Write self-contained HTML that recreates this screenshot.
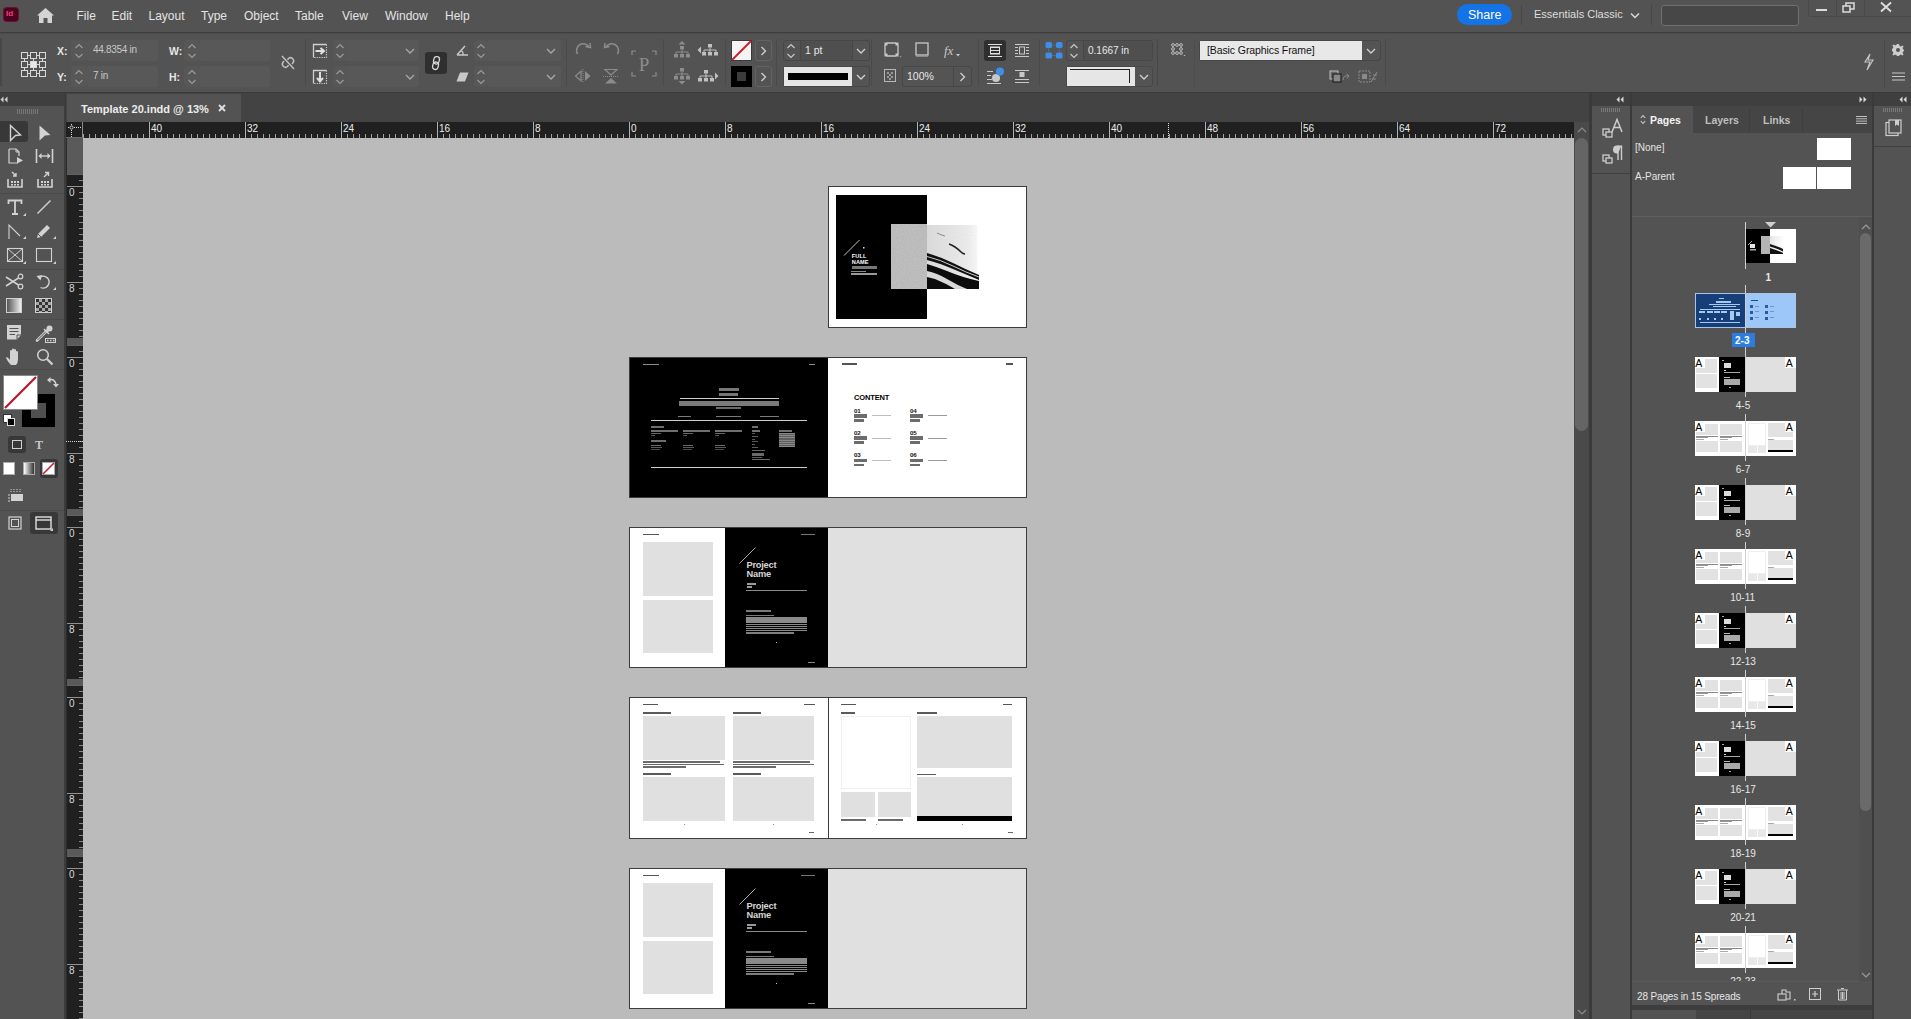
<!DOCTYPE html><html><head><meta charset="utf-8"><style>*{margin:0;padding:0;box-sizing:border-box}
html,body{width:1911px;height:1019px;overflow:hidden;background:#535353;font-family:"Liberation Sans",sans-serif;color:#d6d6d6;position:relative}
.a{position:absolute}
.t{white-space:pre;line-height:1}
svg{position:absolute;overflow:visible}
</style></head><body>
<div class="a" style="left:0px;top:0px;width:1911px;height:32px;background:#535353;"></div>
<div class="a" style="left:0px;top:32px;width:1911px;height:1px;background:#3e3e3e;"></div>
<div class="a" style="left:0px;top:33px;width:1911px;height:1px;background:#4b4b4b;"></div>
<div class="a" style="left:4px;top:8px;width:14px;height:13px;background:#4a0420;border-radius:3px;box-shadow:0 0 0 1px #6b1232"></div>
<div class="a t" style="left:6px;top:10px;font-size:8px;color:#ff3d7a;font-weight:700;">Id</div>
<svg style="left:36px;top:7px" width="19" height="17" viewBox="0 0 19 17"><path d="M9.5 1 L18 8.5 L16 8.5 L16 16 L11.5 16 L11.5 11 L7.5 11 L7.5 16 L3 16 L3 8.5 L1 8.5 Z" fill="#d4d4d4"/></svg>
<div class="a t" style="left:76.5px;top:10px;font-size:12px;color:#e4e4e4;font-weight:400;">File</div>
<div class="a t" style="left:111.5px;top:10px;font-size:12px;color:#e4e4e4;font-weight:400;">Edit</div>
<div class="a t" style="left:148.5px;top:10px;font-size:12px;color:#e4e4e4;font-weight:400;">Layout</div>
<div class="a t" style="left:201px;top:10px;font-size:12px;color:#e4e4e4;font-weight:400;">Type</div>
<div class="a t" style="left:244px;top:10px;font-size:12px;color:#e4e4e4;font-weight:400;">Object</div>
<div class="a t" style="left:295px;top:10px;font-size:12px;color:#e4e4e4;font-weight:400;">Table</div>
<div class="a t" style="left:342px;top:10px;font-size:12px;color:#e4e4e4;font-weight:400;">View</div>
<div class="a t" style="left:385px;top:10px;font-size:12px;color:#e4e4e4;font-weight:400;">Window</div>
<div class="a t" style="left:445px;top:10px;font-size:12px;color:#e4e4e4;font-weight:400;">Help</div>
<div class="a" style="left:1457px;top:4px;width:55px;height:21px;background:#1473e6;border-radius:11px"></div>
<div class="a t" style="left:1468px;top:9px;font-size:12.5px;color:#ffffff;font-weight:400;">Share</div>
<div class="a" style="left:1521px;top:5px;width:1px;height:20px;background:#464646;"></div>
<div class="a t" style="left:1534px;top:9px;font-size:11px;color:#dedede;font-weight:400;">Essentials Classic</div>
<svg style="left:1630px;top:12px" width="10" height="7" viewBox="0 0 10 7"><path d="M1 1.5 L5 5.5 L9 1.5" stroke="#d8d8d8" stroke-width="1.5" fill="none"/></svg>
<div class="a" style="left:1651px;top:5px;width:1px;height:20px;background:#464646;"></div>
<div class="a" style="left:1661px;top:5px;width:138px;height:21px;background:#474747;border:1px solid #707070;border-radius:3px"></div>
<div class="a" style="left:1808px;top:-1px;width:104px;height:18px;border:1px solid #4a4a4a;border-radius:0 0 0 3px"></div>
<div class="a" style="left:1836px;top:0px;width:1px;height:17px;background:#4a4a4a;"></div>
<div class="a" style="left:1864px;top:0px;width:1px;height:17px;background:#4a4a4a;"></div>
<div class="a" style="left:1816px;top:9px;width:11px;height:2px;background:#dcdcdc;"></div>
<svg style="left:1842px;top:2px" width="13" height="11" viewBox="0 0 13 11"><rect x="1" y="4" width="7" height="6" stroke="#dcdcdc" stroke-width="1.5" fill="none"/><path d="M4 4 V1 H12 V7 H8" stroke="#dcdcdc" stroke-width="1.5" fill="none"/></svg>
<svg style="left:1880px;top:2px" width="12" height="10" viewBox="0 0 12 10"><path d="M1 0.5 L11 9.5 M11 0.5 L1 9.5" stroke="#e0e0e0" stroke-width="1.8"/></svg>
<div class="a" style="left:0px;top:34px;width:1911px;height:58px;background:#535353;"></div>
<div class="a" style="left:0px;top:92px;width:1911px;height:1px;background:#3a3a3a;"></div>
<div class="a" style="left:0px;top:38px;width:2px;height:48px;background:#474747;"></div>
<svg style="left:20px;top:51px" width="27" height="26" viewBox="0 0 27 26"><rect x="1.5" y="1.5" width="6" height="6" stroke="#d8d8d8" stroke-width="1" fill="none"/><rect x="1.5" y="10.5" width="6" height="6" stroke="#d8d8d8" stroke-width="1" fill="none"/><rect x="1.5" y="19.5" width="6" height="6" stroke="#d8d8d8" stroke-width="1" fill="none"/><rect x="10.5" y="1.5" width="6" height="6" stroke="#d8d8d8" stroke-width="1" fill="none"/><rect x="10.5" y="10.5" width="6" height="6" stroke="#d8d8d8" stroke-width="1" fill="#e8e8e8"/><rect x="10.5" y="19.5" width="6" height="6" stroke="#d8d8d8" stroke-width="1" fill="none"/><rect x="19.5" y="1.5" width="6" height="6" stroke="#d8d8d8" stroke-width="1" fill="none"/><rect x="19.5" y="10.5" width="6" height="6" stroke="#d8d8d8" stroke-width="1" fill="none"/><rect x="19.5" y="19.5" width="6" height="6" stroke="#d8d8d8" stroke-width="1" fill="none"/><path d="M7.5 4.5 H10 M16.5 4.5 H19 M7.5 13.5 H10 M16.5 13.5 H19 M7.5 22.5 H10 M16.5 22.5 H19 M4.5 7.5 V10 M4.5 16.5 V19 M13.5 7.5 V10 M13.5 16.5 V19 M22.5 7.5 V10 M22.5 16.5 V19" stroke="#d8d8d8" stroke-width="1"/></svg>
<div class="a t" style="left:57px;top:46px;font-size:10.5px;color:#e6e6e6;font-weight:700;">X:</div>
<div class="a t" style="left:57px;top:72px;font-size:10.5px;color:#e6e6e6;font-weight:700;">Y:</div>
<div class="a" style="left:87px;top:40px;width:71px;height:21px;background:#585858;border-radius:2px"></div>
<div class="a" style="left:71px;top:40px;width:16px;height:21px;background:#575757;border-radius:3px"></div><svg style="left:74.0px;top:43px" width="10" height="16" viewBox="0 0 10 16"><path d="M1.5 5 L5 1.5 L8.5 5 M1.5 11 L5 14.5 L8.5 11" stroke="#9a9a9a" stroke-width="1.2" fill="none"/></svg>
<div class="a" style="left:87px;top:66px;width:71px;height:21px;background:#585858;border-radius:2px"></div>
<div class="a" style="left:71px;top:66px;width:16px;height:21px;background:#575757;border-radius:3px"></div><svg style="left:74.0px;top:69px" width="10" height="16" viewBox="0 0 10 16"><path d="M1.5 5 L5 1.5 L8.5 5 M1.5 11 L5 14.5 L8.5 11" stroke="#9a9a9a" stroke-width="1.2" fill="none"/></svg>
<div class="a t" style="left:93px;top:45px;font-size:10px;color:#c8c8c8;font-weight:400;letter-spacing:-0.3px">44.8354 in</div>
<div class="a t" style="left:93px;top:71px;font-size:10px;color:#c8c8c8;font-weight:400;letter-spacing:-0.3px">7 in</div>
<div class="a t" style="left:169px;top:46px;font-size:10.5px;color:#e6e6e6;font-weight:700;">W:</div>
<div class="a t" style="left:169px;top:72px;font-size:10.5px;color:#e6e6e6;font-weight:700;">H:</div>
<div class="a" style="left:200px;top:40px;width:70px;height:21px;background:#585858;border-radius:2px"></div>
<div class="a" style="left:184px;top:40px;width:16px;height:21px;background:#575757;border-radius:3px"></div><svg style="left:187.0px;top:43px" width="10" height="16" viewBox="0 0 10 16"><path d="M1.5 5 L5 1.5 L8.5 5 M1.5 11 L5 14.5 L8.5 11" stroke="#9a9a9a" stroke-width="1.2" fill="none"/></svg>
<div class="a" style="left:200px;top:66px;width:70px;height:21px;background:#585858;border-radius:2px"></div>
<div class="a" style="left:184px;top:66px;width:16px;height:21px;background:#575757;border-radius:3px"></div><svg style="left:187.0px;top:69px" width="10" height="16" viewBox="0 0 10 16"><path d="M1.5 5 L5 1.5 L8.5 5 M1.5 11 L5 14.5 L8.5 11" stroke="#9a9a9a" stroke-width="1.2" fill="none"/></svg>
<svg style="left:281px;top:55px" width="14" height="15" viewBox="0 0 14 15"><path d="M3 6 L1.8 7.5 Q0.5 9.5 2.5 11.5 Q4.5 13.2 6.5 11.5 L7.5 10.2 M11 9 L12.2 7.5 Q13.5 5.5 11.5 3.5 Q9.5 1.8 7.5 3.5 L6.5 4.8 M1 1 L13 14" stroke="#c0c0c0" stroke-width="1.5" fill="none"/></svg>
<div class="a" style="left:305px;top:39px;width:1px;height:47px;background:#4a4a4a;"></div>
<svg style="left:312px;top:43px" width="16" height="16" viewBox="0 0 16 16"><path d="M1.5 14.5 V1.5 H14.5" stroke="#d0d0d0" stroke-width="1.3" fill="none"/><path d="M14.5 1.5 V14.5 H1.5" stroke="#d0d0d0" stroke-width="1.1" stroke-dasharray="1.2 1.2" fill="none"/><path d="M3.5 8 H11 M8.5 5 L12 8 L8.5 11" stroke="#e0e0e0" stroke-width="2" fill="none"/></svg>
<svg style="left:312px;top:69px" width="16" height="16" viewBox="0 0 16 16"><path d="M1.5 14.5 V1.5 H14.5" stroke="#d0d0d0" stroke-width="1.3" fill="none"/><path d="M14.5 1.5 V14.5 H1.5" stroke="#d0d0d0" stroke-width="1.1" stroke-dasharray="1.2 1.2" fill="none"/><path d="M8 3 V11.5 M5 9 L8 12.5 L11 9" stroke="#e0e0e0" stroke-width="2" fill="none"/></svg>
<div class="a" style="left:346px;top:40px;width:73px;height:21px;background:#585858;border-radius:2px"></div>
<div class="a" style="left:333px;top:40px;width:14px;height:21px;background:#575757;border-radius:3px"></div><svg style="left:335.0px;top:43px" width="10" height="16" viewBox="0 0 10 16"><path d="M1.5 5 L5 1.5 L8.5 5 M1.5 11 L5 14.5 L8.5 11" stroke="#9a9a9a" stroke-width="1.2" fill="none"/></svg>
<svg style="left:405px;top:48px" width="10" height="6" viewBox="0 0 10 6"><path d="M1 1 L5 5 L9 1" stroke="#a8a8a8" stroke-width="1.3" fill="none"/></svg>
<div class="a" style="left:346px;top:66px;width:73px;height:21px;background:#585858;border-radius:2px"></div>
<div class="a" style="left:333px;top:66px;width:14px;height:21px;background:#575757;border-radius:3px"></div><svg style="left:335.0px;top:69px" width="10" height="16" viewBox="0 0 10 16"><path d="M1.5 5 L5 1.5 L8.5 5 M1.5 11 L5 14.5 L8.5 11" stroke="#9a9a9a" stroke-width="1.2" fill="none"/></svg>
<svg style="left:405px;top:74px" width="10" height="6" viewBox="0 0 10 6"><path d="M1 1 L5 5 L9 1" stroke="#a8a8a8" stroke-width="1.3" fill="none"/></svg>
<div class="a" style="left:425px;top:52px;width:22px;height:22px;background:#2f2f2f;border-radius:3px"></div>
<svg style="left:431px;top:55px" width="10" height="16" viewBox="0 0 10 16"><g transform="rotate(15 5 8)"><rect x="2" y="1.5" width="5.5" height="7.5" rx="2.75" stroke="#d8d8d8" stroke-width="1.3" fill="none"/><rect x="2.5" y="7" width="5.5" height="7.5" rx="2.75" stroke="#d8d8d8" stroke-width="1.3" fill="none"/></g></svg>
<svg style="left:456px;top:45px" width="13" height="11" viewBox="0 0 13 11"><path d="M1 10 L9 1 M1 10 H12" stroke="#c8c8c8" stroke-width="1.5" fill="none"/><path d="M7 10 Q7.5 6.5 5 5.5" stroke="#c8c8c8" stroke-width="1.2" fill="none"/></svg>
<svg style="left:456px;top:72px" width="13" height="10" viewBox="0 0 13 10"><path d="M4 0.5 H12.5 L9 9.5 H0.5 Z" fill="#c8c8c8"/></svg>
<div class="a" style="left:488px;top:40px;width:73px;height:21px;background:#585858;border-radius:2px"></div>
<div class="a" style="left:474px;top:40px;width:14px;height:21px;background:#575757;border-radius:3px"></div><svg style="left:476.0px;top:43px" width="10" height="16" viewBox="0 0 10 16"><path d="M1.5 5 L5 1.5 L8.5 5 M1.5 11 L5 14.5 L8.5 11" stroke="#9a9a9a" stroke-width="1.2" fill="none"/></svg>
<svg style="left:546px;top:48px" width="10" height="6" viewBox="0 0 10 6"><path d="M1 1 L5 5 L9 1" stroke="#a8a8a8" stroke-width="1.3" fill="none"/></svg>
<div class="a" style="left:488px;top:66px;width:73px;height:21px;background:#585858;border-radius:2px"></div>
<div class="a" style="left:474px;top:66px;width:14px;height:21px;background:#575757;border-radius:3px"></div><svg style="left:476.0px;top:69px" width="10" height="16" viewBox="0 0 10 16"><path d="M1.5 5 L5 1.5 L8.5 5 M1.5 11 L5 14.5 L8.5 11" stroke="#9a9a9a" stroke-width="1.2" fill="none"/></svg>
<svg style="left:546px;top:74px" width="10" height="6" viewBox="0 0 10 6"><path d="M1 1 L5 5 L9 1" stroke="#a8a8a8" stroke-width="1.3" fill="none"/></svg>
<div class="a" style="left:566px;top:39px;width:1px;height:47px;background:#4a4a4a;"></div>
<svg style="left:575px;top:42px" width="18" height="16" viewBox="0 0 18 16"><path d="M2.5 12 A6.5 6.5 0 0 1 14 5" stroke="#8c8c8c" stroke-width="1.5" fill="none"/><path d="M10.5 4.5 L15.5 5.5 L15 1" stroke="#8c8c8c" stroke-width="1.5" fill="none"/></svg>
<svg style="left:602px;top:42px" width="18" height="16" viewBox="0 0 18 16"><path d="M15.5 12 A6.5 6.5 0 0 0 4 5" stroke="#8c8c8c" stroke-width="1.5" fill="none"/><path d="M7.5 4.5 L2.5 5.5 L3 1" stroke="#8c8c8c" stroke-width="1.5" fill="none"/></svg>
<svg style="left:574px;top:68px" width="18" height="16" viewBox="0 0 18 16"><path d="M7 3 V13 L1.5 8 Z" stroke="#8c8c8c" stroke-width="1.2" fill="none"/><path d="M11 3 V13 L16.5 8 Z" fill="#8c8c8c"/><path d="M9 1 V15" stroke="#8c8c8c" stroke-width="1" stroke-dasharray="1 1"/></svg>
<svg style="left:602px;top:68px" width="18" height="17" viewBox="0 0 18 17"><path d="M3 1.5 H15 L9 7 Z" stroke="#8c8c8c" stroke-width="1.2" fill="none"/><path d="M3 15.5 H15 L9 10 Z" fill="#8c8c8c"/><path d="M1 8.5 H17" stroke="#8c8c8c" stroke-width="1" stroke-dasharray="1 1"/></svg>
<svg style="left:631px;top:50px" width="26" height="27" viewBox="0 0 26 27"><path d="M1 5 V1 H5 M21 1 H25 V5 M25 22 V26 H21 M5 26 H1 V22" stroke="#8c8c8c" stroke-width="1.2" fill="none"/><text x="13" y="21" font-family="Liberation Serif" font-size="19" fill="#8c8c8c" text-anchor="middle">P</text></svg>
<div class="a" style="left:663px;top:39px;width:1px;height:47px;background:#4a4a4a;"></div>
<svg style="left:672px;top:41px" width="20" height="18" viewBox="0 0 20 18"><rect x="8" y="5" width="4" height="3.5" fill="#8c8c8c"/><path d="M10 8.5 V11 M4 11 H16 M4 11 V13 M10 11 V13 M16 11 V13" stroke="#8c8c8c" stroke-width="1"/><rect x="2" y="13" width="4" height="3.5" fill="#8c8c8c"/><rect x="8" y="13" width="4" height="3.5" fill="#8c8c8c"/><rect x="14" y="13" width="4" height="3.5" fill="#8c8c8c"/><path d="M6.5 3.5 L10 0 L13.5 3.5 Z" fill="#8c8c8c"/></svg>
<svg style="left:697px;top:43px" width="22" height="14" viewBox="0 0 22 14"><path d="M0.5 7 L4 3.5 V10.5 Z" fill="#c0c0c0"/><rect x="11" y="1" width="4" height="3.5" fill="#c0c0c0"/><path d="M13 4.5 V7 M7 7 H19 M7 7 V9 M13 7 V9 M19 7 V9" stroke="#c0c0c0" stroke-width="1"/><rect x="5" y="9" width="4" height="3.5" fill="#c0c0c0"/><rect x="11" y="9" width="4" height="3.5" fill="#c0c0c0"/><rect x="17" y="9" width="4" height="3.5" fill="#c0c0c0"/></svg>
<svg style="left:672px;top:67px" width="20" height="18" viewBox="0 0 20 18"><rect x="8" y="1" width="4" height="3.5" fill="#8c8c8c"/><path d="M10 4.5 V7 M4 7 H16 M4 7 V9 M10 7 V9 M16 7 V9" stroke="#8c8c8c" stroke-width="1"/><rect x="2" y="9" width="4" height="3.5" fill="#8c8c8c"/><rect x="8" y="9" width="4" height="3.5" fill="#8c8c8c"/><rect x="14" y="9" width="4" height="3.5" fill="#8c8c8c"/><path d="M6.5 14 L10 17.5 L13.5 14 Z" fill="#8c8c8c"/></svg>
<svg style="left:697px;top:69px" width="22" height="14" viewBox="0 0 22 14"><path d="M21.5 7 L18 3.5 V10.5 Z" fill="#c0c0c0"/><rect x="7" y="1" width="4" height="3.5" fill="#c0c0c0"/><path d="M9 4.5 V7 M3 7 H15 M3 7 V9 M9 7 V9 M15 7 V9" stroke="#c0c0c0" stroke-width="1"/><rect x="1" y="9" width="4" height="3.5" fill="#c0c0c0"/><rect x="7" y="9" width="4" height="3.5" fill="#c0c0c0"/><rect x="13" y="9" width="4" height="3.5" fill="#c0c0c0"/></svg>
<div class="a" style="left:725px;top:39px;width:1px;height:47px;background:#4a4a4a;"></div>
<div class="a" style="left:731px;top:40px;width:21px;height:21px;background:#f4f4f4;border:1px solid #3a3a3a"></div>
<svg style="left:731px;top:40px" width="21" height="21" viewBox="0 0 21 21"><path d="M1 20 L20 1" stroke="#c8202c" stroke-width="2"/></svg>
<div class="a" style="left:731px;top:66px;width:21px;height:21px;background:#000;"></div>
<div class="a" style="left:737px;top:72px;width:9px;height:9px;background:#3c3c3c;"></div>
<div class="a" style="left:755px;top:40px;width:17px;height:21px;border:1px solid #636363;border-radius:3px"></div>
<svg style="left:760px;top:46px" width="7" height="10" viewBox="0 0 7 10"><path d="M1.5 1 L5.5 5 L1.5 9" stroke="#d0d0d0" stroke-width="1.3" fill="none"/></svg>
<div class="a" style="left:755px;top:66px;width:17px;height:21px;border:1px solid #636363;border-radius:3px"></div>
<svg style="left:760px;top:72px" width="7" height="10" viewBox="0 0 7 10"><path d="M1.5 1 L5.5 5 L1.5 9" stroke="#d0d0d0" stroke-width="1.3" fill="none"/></svg>
<div class="a" style="left:776px;top:39px;width:1px;height:47px;background:#4a4a4a;"></div>
<div class="a" style="left:783px;top:40px;width:87px;height:21px;border:1px solid #474747;border-radius:3px;background:#545454"></div>
<div class="a" style="left:800px;top:41px;width:1px;height:19px;background:#474747;"></div>
<div class="a" style="left:852px;top:41px;width:1px;height:19px;background:#474747;"></div>
<div class="a" style="left:801px;top:41px;width:51px;height:19px;background:#4f4f4f"></div>
<svg style="left:786px;top:43px" width="10" height="16" viewBox="0 0 10 16"><path d="M1.5 5 L5 1.5 L8.5 5 M1.5 11 L5 14.5 L8.5 11" stroke="#c8c8c8" stroke-width="1.2" fill="none"/></svg>
<div class="a t" style="left:805px;top:45px;font-size:10.5px;color:#e8e8e8;font-weight:400;">1 pt</div>
<svg style="left:856px;top:48px" width="10" height="6" viewBox="0 0 10 6"><path d="M1 1 L5 5 L9 1" stroke="#d0d0d0" stroke-width="1.3" fill="none"/></svg>
<div class="a" style="left:783px;top:66px;width:87px;height:21px;border:1px solid #474747;border-radius:3px;background:#545454"></div>
<div class="a" style="left:784px;top:67px;width:68px;height:19px;background:#e6e6e6"></div>
<div class="a" style="left:788px;top:73px;width:60px;height:7px;background:#000;"></div>
<svg style="left:856px;top:74px" width="10" height="6" viewBox="0 0 10 6"><path d="M1 1 L5 5 L9 1" stroke="#d0d0d0" stroke-width="1.3" fill="none"/></svg>
<div class="a" style="left:871px;top:39px;width:1px;height:47px;background:#4a4a4a;"></div>
<svg style="left:884px;top:42px" width="18" height="16" viewBox="0 0 18 16"><path d="M3 1 H12 M1 3 V12 M3 14 H12 M14 3 V12" stroke="#c8c8c8" stroke-width="1.3"/><rect x="0.5" y="0.5" width="3" height="3" fill="#c8c8c8"/><rect x="11.5" y="0.5" width="3" height="3" fill="#c8c8c8"/><rect x="0.5" y="11.5" width="3" height="3" fill="#c8c8c8"/><rect x="11.5" y="11.5" width="3" height="3" fill="#c8c8c8"/><path d="M15.5 14.5 L17.5 14.5 L16.5 15.5 Z" fill="#c8c8c8"/></svg>
<svg style="left:915px;top:42px" width="14" height="15" viewBox="0 0 14 15"><rect x="1" y="1" width="12" height="12" stroke="#c8c8c8" stroke-width="1.3" fill="none"/><path d="M1 14.5 H13" stroke="#8a8a8a" stroke-width="1"/></svg>
<div class="a t" style="left:944px;top:44px;font-size:13px;color:#c8c8c8;font-weight:400;font-family:Liberation Serif"><i>fx</i></div>
<svg style="left:956px;top:54px" width="4" height="3" viewBox="0 0 4 3"><path d="M0 0 H4 L2 2.5 Z" fill="#c8c8c8"/></svg>
<svg style="left:884px;top:69px" width="12" height="13" viewBox="0 0 12 13"><rect x="0.5" y="0.5" width="11" height="12" stroke="#b8b8b8" stroke-width="1" fill="none"/><path d="M3 3 H5 V5 H3 Z M7 3 H9 V5 H7 Z M5 5 H7 V7 H5 Z M3 7 H5 V9 H3 Z M7 7 H9 V9 H7 Z M5 9 H7 V11 H5 Z" fill="#9a9a9a"/></svg>
<div class="a" style="left:902px;top:66px;width:70px;height:21px;border:1px solid #474747;border-radius:3px;background:#545454"></div>
<div class="a" style="left:953px;top:67px;width:1px;height:19px;background:#474747;"></div>
<div class="a t" style="left:907px;top:71px;font-size:10.5px;color:#e8e8e8;font-weight:400;">100%</div>
<svg style="left:959px;top:72px" width="7" height="10" viewBox="0 0 7 10"><path d="M1.5 1 L5.5 5 L1.5 9" stroke="#d0d0d0" stroke-width="1.3" fill="none"/></svg>
<div class="a" style="left:978px;top:39px;width:1px;height:47px;background:#4a4a4a;"></div>
<div class="a" style="left:984px;top:40px;width:22px;height:21px;background:#2f2f2f;border-radius:3px"></div>
<svg style="left:987px;top:43px" width="16" height="15" viewBox="0 0 16 15"><path d="M1 1.5 H15 M1 13.5 H15 M3 4.5 H13 M3 7.5 H13 M3 10.5 H13" stroke="#e0e0e0" stroke-width="1.2"/><rect x="3.5" y="4" width="9" height="7" stroke="#e0e0e0" stroke-width="1" fill="none"/></svg>
<svg style="left:1014px;top:43px" width="16" height="15" viewBox="0 0 16 15"><path d="M1 1.5 H15 M1 13.5 H15 M1 4.5 H4 M1 7.5 H4 M1 10.5 H4 M12 4.5 H15 M12 7.5 H15 M12 10.5 H15" stroke="#c8c8c8" stroke-width="1.2"/><rect x="5.5" y="4" width="5" height="7" stroke="#c8c8c8" stroke-width="1" fill="none"/></svg>
<svg style="left:986px;top:67px" width="20" height="18" viewBox="0 0 20 18"><path d="M1 4.5 H7 M1 8.5 H5 M1 12.5 H6 M1 16.5 H15" stroke="#c8c8c8" stroke-width="1.2"/><circle cx="10" cy="11" r="4" fill="#c8c8c8"/><circle cx="14" cy="4.5" r="4" fill="#3d8fe8"/></svg>
<svg style="left:1014px;top:69px" width="16" height="15" viewBox="0 0 16 15"><path d="M1 1.5 H15 M1 13.5 H15 M1 10.5 H15" stroke="#c8c8c8" stroke-width="1.2"/><rect x="5.5" y="3" width="5" height="5" fill="#c8c8c8"/></svg>
<div class="a" style="left:1039px;top:39px;width:1px;height:47px;background:#4a4a4a;"></div>
<svg style="left:1045px;top:41px" width="18" height="18" viewBox="0 0 18 18"><rect x="0.5" y="1" width="6.5" height="6" rx="1.5" fill="#3f8de6"/><rect x="11" y="1" width="6.5" height="6" rx="1.5" fill="#3f8de6"/><rect x="0.5" y="11.5" width="6.5" height="6" rx="1.5" fill="#3f8de6"/><rect x="11" y="11.5" width="6.5" height="6" rx="1.5" fill="#3f8de6"/><path d="M7.5 4 H10.5 M7.5 14.5 H10.5 M3.75 7.5 V11 M14.25 7.5 V11" stroke="#3f8de6" stroke-width="0.9" stroke-dasharray="1 1"/></svg>
<div class="a" style="left:1066px;top:40px;width:87px;height:21px;border:1px solid #474747;border-radius:3px;background:#545454"></div>
<div class="a" style="left:1083px;top:41px;width:1px;height:19px;background:#474747;"></div>
<div class="a" style="left:1084px;top:41px;width:68px;height:19px;background:#4f4f4f"></div>
<svg style="left:1069px;top:43px" width="10" height="16" viewBox="0 0 10 16"><path d="M1.5 5 L5 1.5 L8.5 5 M1.5 11 L5 14.5 L8.5 11" stroke="#c8c8c8" stroke-width="1.2" fill="none"/></svg>
<div class="a t" style="left:1088px;top:45.5px;font-size:10px;color:#e8e8e8;font-weight:400;">0.1667 in</div>
<div class="a" style="left:1066px;top:66px;width:87px;height:21px;border:1px solid #474747;border-radius:3px;background:#545454"></div>
<div class="a" style="left:1067px;top:67px;width:68px;height:19px;background:#e6e6e6"></div>
<div class="a" style="left:1129px;top:70px;width:1px;height:13px;background:#222;"></div>
<div class="a" style="left:1070px;top:69px;width:60px;height:1px;background:#222;"></div>
<svg style="left:1139px;top:74px" width="10" height="6" viewBox="0 0 10 6"><path d="M1 1 L5 5 L9 1" stroke="#d0d0d0" stroke-width="1.3" fill="none"/></svg>
<div class="a" style="left:1157px;top:39px;width:1px;height:47px;background:#474747;"></div>
<div class="a" style="left:1194px;top:39px;width:1px;height:47px;background:#4d4d4d;"></div>
<svg style="left:1171px;top:43px" width="15" height="14" viewBox="0 0 15 14"><g stroke="#c8c8c8" stroke-width="0.9" fill="none"><circle cx="2" cy="2" r="1.4"/><circle cx="6" cy="2" r="1.4"/><circle cx="10" cy="2" r="1.4"/><circle cx="2" cy="6" r="1.4"/><circle cx="10" cy="6" r="1.4"/><circle cx="2" cy="10" r="1.4"/><circle cx="6" cy="10" r="1.4"/><circle cx="10" cy="10" r="1.4"/></g><path d="M12.5 12 H14.5 L13.5 13.2 Z" fill="#c8c8c8"/></svg>
<div class="a" style="left:1199px;top:40px;width:182px;height:21px;border:1px solid #474747;border-radius:3px;background:#545454"></div>
<div class="a" style="left:1200px;top:41px;width:162px;height:19px;background:#e8e8e8"></div>
<div class="a t" style="left:1207px;top:45px;font-size:10.5px;color:#111111;font-weight:400;letter-spacing:-0.1px">[Basic Graphics Frame]</div>
<svg style="left:1366px;top:48px" width="10" height="6" viewBox="0 0 10 6"><path d="M1 1 L5 5 L9 1" stroke="#d0d0d0" stroke-width="1.3" fill="none"/></svg>
<svg style="left:1329px;top:70px" width="22" height="14" viewBox="0 0 22 14"><rect x="1" y="1" width="8" height="8" stroke="#c0c0c0" fill="#666"/><rect x="4" y="4" width="8" height="8" stroke="#222" stroke-width="1.2" fill="#888"/><path d="M14 10 Q14 5 20 6 M17.5 4 L20 6 L18 8.5" stroke="#8a8a8a" fill="none"/></svg>
<svg style="left:1358px;top:70px" width="20" height="14" viewBox="0 0 20 14"><rect x="1" y="1" width="11" height="11" stroke="#8a8a8a" stroke-dasharray="2 1" fill="none"/><rect x="4" y="4" width="5" height="5" fill="#8a8a8a"/><path d="M13 12 L19 2 M15 5 H19 M14 9 H18" stroke="#8a8a8a" fill="none"/></svg>
<div class="a" style="left:1385px;top:39px;width:1px;height:47px;background:#4a4a4a;"></div>
<svg style="left:1862px;top:53px" width="13" height="18" viewBox="0 0 13 18"><path d="M8 1 L3 9 H8 L5 17 L11 7 H6 Z" stroke="#c8c8c8" stroke-width="1.1" fill="none"/></svg>
<div class="a" style="left:1884px;top:40px;width:1px;height:48px;background:#4a4a4a;"></div>
<svg style="left:1892px;top:44px" width="12" height="12" viewBox="0 0 12 12"><path d="M5 0 H7 L7.4 1.8 L8.9 2.4 L10.4 1.4 L11.6 2.6 L10.6 4.1 L11.2 5.6 L12 5.8 V7 L11.2 7.4 L10.6 8.9 L11.6 10.4 L10.4 11.6 L8.9 10.6 L7.4 11.2 L7 12 H5 L4.6 11.2 L3.1 10.6 L1.6 11.6 L0.4 10.4 L1.4 8.9 L0.8 7.4 L0 7 V5 L0.8 4.6 L1.4 3.1 L0.4 1.6 L1.6 0.4 L3.1 1.4 L4.6 0.8 Z" fill="#cdcdcd"/><circle cx="6" cy="6" r="2" fill="#535353"/></svg>
<svg style="left:1892px;top:72px" width="13" height="9" viewBox="0 0 13 9"><path d="M0 1 H13 M0 4.5 H13 M0 8 H13" stroke="#c8c8c8" stroke-width="1.1"/></svg>
<div class="a" style="left:0px;top:93px;width:64px;height:926px;background:#535353;"></div>
<div class="a" style="left:0px;top:93px;width:64px;height:13px;background:#3f3f3f;"></div>
<div class="a" style="left:64px;top:93px;width:2px;height:926px;background:#3c3c3c;"></div>
<svg style="left:0px;top:96px" width="8" height="7" viewBox="0 0 8 7"><path d="M3.5 0.5 L0.5 3.5 L3.5 6.5 Z M7.5 0.5 L4.5 3.5 L7.5 6.5 Z" fill="#d0d0d0"/></svg>
<div class="a" style="left:17px;top:109px;width:21px;height:5px;background:repeating-linear-gradient(90deg,#777 0 1px,transparent 1px 2px)"></div>
<div class="a" style="left:0px;top:121px;width:28px;height:21px;background:#383838;border-radius:0 3px 3px 0"></div>
<svg style="left:9px;top:124px" width="13" height="18" viewBox="0 0 13 18"><path d="M1.5 1.5 L11.5 11 L6.5 11.5 L1.5 16.5 Z" stroke="#d2d2d2" stroke-width="1.4" fill="none"/></svg>
<svg style="left:38px;top:124px" width="14" height="18" viewBox="0 0 14 18"><path d="M1.5 1.5 L12.5 11 L7 11.5 L1.5 16.5 Z" fill="#d2d2d2"/></svg>
<svg style="left:8px;top:148px" width="16" height="16" viewBox="0 0 16 16"><path d="M1 1 H8 L11 4 V8 M1 1 V15 H10" stroke="#d2d2d2" stroke-width="1.2" fill="none"/><path d="M8 1 V4 H11" stroke="#d2d2d2" stroke-width="1" fill="none"/><path d="M9 9 L15 12.5 L9 15.5 Z" fill="#d2d2d2"/></svg>
<svg style="left:35px;top:148px" width="19" height="16" viewBox="0 0 19 16"><path d="M1.5 1 V15 M17.5 1 V15" stroke="#d2d2d2" stroke-width="1.6"/><path d="M4 8 H15" stroke="#d2d2d2" stroke-width="1.4"/><path d="M3.5 8 L6.5 5 V11 Z M15.5 8 L12.5 5 V11 Z" fill="#d2d2d2"/></svg>
<svg style="left:7px;top:171px" width="16" height="17" viewBox="0 0 16 17"><path d="M1 8 V16 H15 V8" stroke="#d2d2d2" stroke-width="1.6" fill="none"/><path d="M4 10 H6 V12 H4 Z M7 10 H9 V12 H7 Z M10 10 H12 V12 H10 Z M4 13 H6 V14.5 H4 Z M7 13 H9 V14.5 H7 Z M10 13 H12 V14.5 H10 Z" fill="#d2d2d2"/><path d="M5 1 L9 5 M9 2 V5 H6" stroke="#d2d2d2" stroke-width="1.4" fill="none"/></svg>
<svg style="left:37px;top:171px" width="16" height="17" viewBox="0 0 16 17"><path d="M1 8 V16 H15 V8" stroke="#d2d2d2" stroke-width="1.6" fill="none"/><path d="M4 10 H6 V12 H4 Z M7 10 H9 V12 H7 Z M10 10 H12 V12 H10 Z M4 13 H6 V14.5 H4 Z M7 13 H9 V14.5 H7 Z M10 13 H12 V14.5 H10 Z" fill="#d2d2d2"/><path d="M7 6 L11 2 M8 1.5 H11.5 V5" stroke="#d2d2d2" stroke-width="1.4" fill="none"/></svg>
<div class="a" style="left:0px;top:193px;width:64px;height:1px;background:#4a4a4a;"></div>
<svg style="left:7px;top:199px" width="20" height="19" viewBox="0 0 20 19"><path d="M1.5 5 V1.5 H14.5 V5 M8 1.5 V15 M5 15 H11" stroke="#d2d2d2" stroke-width="1.8" fill="none"/><path d="M19 17 L16 17 L19 14 Z" fill="#d2d2d2"/></svg>
<svg style="left:36px;top:199px" width="16" height="16" viewBox="0 0 16 16"><path d="M1.5 14.5 L14.5 1.5" stroke="#d2d2d2" stroke-width="1.5"/></svg>
<svg style="left:7px;top:223px" width="20" height="18" viewBox="0 0 20 18"><path d="M2 16 V2 L13 13" stroke="#d2d2d2" stroke-width="1.1" fill="none"/><path d="M19 16 L16 16 L19 13 Z" fill="#d2d2d2"/></svg>
<svg style="left:35px;top:223px" width="22" height="18" viewBox="0 0 22 18"><path d="M2 15 L3 11 L12 2 L15 5 L6 14 Z" fill="#d2d2d2"/><path d="M3 11 L6 14" stroke="#535353" stroke-width="1"/><path d="M21 16 L18 16 L21 13 Z" fill="#d2d2d2"/></svg>
<svg style="left:6px;top:247px" width="21" height="18" viewBox="0 0 21 18"><rect x="1.5" y="1.5" width="15" height="13" stroke="#d2d2d2" stroke-width="1.1" fill="none"/><path d="M1.5 1.5 L16.5 14.5 M16.5 1.5 L1.5 14.5" stroke="#d2d2d2" stroke-width="1"/><path d="M20 17 L17 17 L20 14 Z" fill="#d2d2d2"/></svg>
<svg style="left:35px;top:247px" width="22" height="18" viewBox="0 0 22 18"><rect x="1.5" y="1.5" width="15" height="13" stroke="#d2d2d2" stroke-width="1.1" fill="none"/><path d="M21 17 L18 17 L21 14 Z" fill="#d2d2d2"/></svg>
<div class="a" style="left:0px;top:269px;width:64px;height:1px;background:#4a4a4a;"></div>
<svg style="left:5px;top:273px" width="19" height="17" viewBox="0 0 19 17"><circle cx="15.5" cy="3.5" r="2.3" stroke="#d2d2d2" stroke-width="1.2" fill="none"/><circle cx="15.5" cy="13.5" r="2.3" stroke="#d2d2d2" stroke-width="1.2" fill="none"/><path d="M13.5 5 L1 13 M13.5 12 L1 4" stroke="#d2d2d2" stroke-width="1.5"/></svg>
<svg style="left:35px;top:273px" width="22" height="18" viewBox="0 0 22 18"><path d="M5 4 A6 6 0 1 1 5.5 14.5" stroke="#d2d2d2" stroke-width="1.3" fill="none"/><path d="M1.5 3 L7 2 L5.5 7.5 Z" fill="#d2d2d2"/><path d="M21 17 L18 17 L21 14 Z" fill="#d2d2d2"/></svg>
<div class="a" style="left:6px;top:298px;width:16px;height:15px;border:1px solid #d0d0d0;background:linear-gradient(90deg,#555,#f0f0f0)"></div>
<div class="a" style="left:35px;top:298px;width:17px;height:15px;border:1px solid #cfcfcf;background-color:#333;background-image:linear-gradient(45deg,#a8a8a8 25%,transparent 25%,transparent 75%,#a8a8a8 75%),linear-gradient(45deg,#a8a8a8 25%,transparent 25%,transparent 75%,#a8a8a8 75%);background-size:6px 6px;background-position:0 0,3px 3px"></div>
<div class="a" style="left:0px;top:319px;width:64px;height:1px;background:#4a4a4a;"></div>
<svg style="left:6px;top:324px" width="16" height="17" viewBox="0 0 16 17"><path d="M1 1 H15 V11 L11 15.5 H1 Z" fill="#d2d2d2"/><path d="M3.5 4.5 H12.5 M3.5 7.5 H12.5 M3.5 10.5 H9" stroke="#535353" stroke-width="1"/><path d="M11 15.5 V11 H15" stroke="#535353" stroke-width="1" fill="none"/></svg>
<svg style="left:34px;top:323px" width="24" height="20" viewBox="0 0 24 20"><path d="M3 17.5 L12 8.5" stroke="#d2d2d2" stroke-width="2.6" stroke-linecap="round"/><path d="M3.6 16.9 L11.4 9.1" stroke="#535353" stroke-width="1"/><path d="M10 6 L15 11" stroke="#d2d2d2" stroke-width="1.5"/><circle cx="15.5" cy="5.5" r="3" fill="#d2d2d2"/><path d="M12.5 8.5 L15.5 5.5" stroke="#d2d2d2" stroke-width="3"/><rect x="11.5" y="15.5" width="10" height="4" stroke="#d2d2d2" stroke-width="1" fill="none"/><path d="M13 17.5 H14.5 M16 17.5 H17.5 M19 17.5 H20.5" stroke="#d2d2d2" stroke-width="1.5"/></svg>
<svg style="left:5px;top:348px" width="18" height="18" viewBox="0 0 18 18"><path d="M6 17 Q3 14 1.2 10.5 Q0.8 9.3 2 9.2 Q3 9.2 4.5 11.5 L5 11.5 V3 Q5 2 6 2 Q7 2 7 3 V9 V1.5 Q7 0.5 8 0.5 Q9 0.5 9 1.5 V9 V2 Q9 1 10 1 Q11 1 11 2 V9 V4 Q11 3 12 3 Q13 3 13 4 V11.5 Q13 15 11 17 Z" fill="#d2d2d2"/></svg>
<svg style="left:36px;top:348px" width="18" height="18" viewBox="0 0 18 18"><circle cx="7" cy="7" r="5.3" stroke="#d2d2d2" stroke-width="1.5" fill="none"/><path d="M11 11 L16.5 16.5" stroke="#d2d2d2" stroke-width="2.2"/></svg>
<div class="a" style="left:0px;top:369px;width:64px;height:1px;background:#4a4a4a;"></div>
<div class="a" style="left:22px;top:394px;width:33px;height:33px;background:#000"></div>
<div class="a" style="left:31px;top:403px;width:15px;height:15px;background:#505050"></div>
<div class="a" style="left:3px;top:375px;width:35px;height:35px;background:#fff;border:1px solid #888"></div>
<svg style="left:3px;top:375px" width="35" height="35" viewBox="0 0 35 35"><path d="M2 33 L33 2" stroke="#b81428" stroke-width="2.2"/></svg>
<svg style="left:47px;top:376px" width="12" height="12" viewBox="0 0 12 12"><path d="M2 4 Q7 2 9 8" stroke="#d2d2d2" stroke-width="1.5" fill="none"/><path d="M0 4 L3.5 1 L3.5 7 Z M6 8 H12 L9 11.5 Z" fill="#d2d2d2"/></svg>
<div class="a" style="left:3px;top:414px;width:9px;height:9px;background:#fff;border:1px solid #333"></div>
<div class="a" style="left:7px;top:418px;width:8px;height:8px;background:#000;border:1px solid #ddd"></div>
<div class="a" style="left:8px;top:436px;width:18px;height:17px;background:#383838;border-radius:3px"></div>
<div class="a" style="left:12px;top:440px;width:10px;height:9px;background:#d0d0d0;"></div>
<div class="a" style="left:13px;top:441px;width:8px;height:7px;background:#383838;"></div>
<div class="a t" style="left:35px;top:439px;font-size:12px;color:#c8c8c8;font-weight:700;font-family:Liberation Serif">T</div>
<div class="a" style="left:3px;top:462px;width:12px;height:13px;background:#fff;border:1px solid #aaa"></div>
<div class="a" style="left:23px;top:462px;width:12px;height:13px;background:linear-gradient(90deg,#fff,#333);border:1px solid #aaa"></div>
<div class="a" style="left:40px;top:459px;width:18px;height:19px;background:#383838;border-radius:3px"></div>
<div class="a" style="left:42px;top:462px;width:13px;height:13px;background:#fff;border:1px solid #aaa"></div>
<svg style="left:42px;top:462px" width="13" height="13" viewBox="0 0 13 13"><path d="M1 12 L12 1" stroke="#c8202c" stroke-width="1.6"/></svg>
<svg style="left:7px;top:488px" width="17" height="14" viewBox="0 0 17 14"><path d="M4 1 V5 M7 1 V5 M10 1 V5 M13 1 V5" stroke="#d2d2d2" stroke-width="1" stroke-dasharray="1 1"/><rect x="4" y="6" width="12" height="7" fill="#d2d2d2"/><path d="M1 7 H3 M1 10 H3 M1 13 H3" stroke="#d2d2d2" stroke-width="1.2"/></svg>
<div class="a" style="left:0px;top:510px;width:64px;height:1px;background:#4a4a4a;"></div>
<svg style="left:8px;top:516px" width="14" height="14" viewBox="0 0 14 14"><rect x="1" y="1" width="12" height="12" stroke="#d2d2d2" stroke-width="1.2" fill="none"/><rect x="3.5" y="3.5" width="7" height="7" stroke="#d2d2d2" stroke-width="1" fill="none"/></svg>
<div class="a" style="left:30px;top:512px;width:28px;height:22px;background:#383838;border-radius:3px"></div>
<svg style="left:35px;top:516px" width="18" height="15" viewBox="0 0 18 15"><rect x="1" y="1" width="15" height="12" stroke="#e0e0e0" stroke-width="1.4" fill="none"/><path d="M1 4 H16" stroke="#e0e0e0" stroke-width="1.4"/><path d="M18 12 V15 H15 Z" fill="#d2d2d2"/></svg>
<div class="a" style="left:66px;top:93px;width:1524px;height:29px;background:#434343;"></div>
<div class="a" style="left:67px;top:94px;width:174px;height:28px;background:#535353;"></div>
<div class="a t" style="left:81px;top:104px;font-size:11px;color:#ececec;font-weight:700;">Template 20.indd @ 13%</div>
<svg style="left:218px;top:104px" width="8" height="8" viewBox="0 0 8 8"><path d="M1 1 L7 7 M7 1 L1 7" stroke="#e0e0e0" stroke-width="1.8"/></svg>
<div class="a" style="left:66px;top:122px;width:17px;height:16px;background:#202020;"></div>
<svg style="left:66px;top:122px" width="17" height="16" viewBox="0 0 17 16"><path d="M2 5.5 H16 M5.5 2 V16" stroke="#dcdcdc" stroke-width="1" stroke-dasharray="1 1"/><circle cx="5.5" cy="5.5" r="1.6" stroke="#dcdcdc" stroke-width="0.8" fill="#202020"/></svg>
<div class="a" style="left:82px;top:122px;width:1px;height:16px;background:#8c8c8c;"></div>
<div class="a" style="left:66px;top:137px;width:17px;height:1px;background:#6a6a6a;"></div>
<div class="a" style="left:83px;top:122px;width:1491px;height:16px;background:#202020;overflow:hidden">
<div class="a" style="left:0px;top:12px;width:1491px;height:4px;background:repeating-linear-gradient(90deg,#a0a0a0 0 1px,transparent 1px 6px)"></div>
<div class="a" style="left:66px;top:0px;width:1px;height:16px;background:#b0b0b0"></div>
<div class="a" style="left:67px;top:0px;width:14px;height:11px;background:#202020"></div>
<div class="a t" style="left:68px;top:2px;font-size:10px;color:#ececec">40</div>
<div class="a" style="left:162px;top:0px;width:1px;height:16px;background:#b0b0b0"></div>
<div class="a" style="left:163px;top:0px;width:14px;height:11px;background:#202020"></div>
<div class="a t" style="left:164px;top:2px;font-size:10px;color:#ececec">32</div>
<div class="a" style="left:258px;top:0px;width:1px;height:16px;background:#b0b0b0"></div>
<div class="a" style="left:259px;top:0px;width:14px;height:11px;background:#202020"></div>
<div class="a t" style="left:260px;top:2px;font-size:10px;color:#ececec">24</div>
<div class="a" style="left:354px;top:0px;width:1px;height:16px;background:#b0b0b0"></div>
<div class="a" style="left:355px;top:0px;width:14px;height:11px;background:#202020"></div>
<div class="a t" style="left:356px;top:2px;font-size:10px;color:#ececec">16</div>
<div class="a" style="left:450px;top:0px;width:1px;height:16px;background:#b0b0b0"></div>
<div class="a" style="left:451px;top:0px;width:14px;height:11px;background:#202020"></div>
<div class="a t" style="left:452px;top:2px;font-size:10px;color:#ececec">8</div>
<div class="a" style="left:546px;top:0px;width:1px;height:16px;background:#b0b0b0"></div>
<div class="a" style="left:547px;top:0px;width:14px;height:11px;background:#202020"></div>
<div class="a t" style="left:548px;top:2px;font-size:10px;color:#ececec">0</div>
<div class="a" style="left:642px;top:0px;width:1px;height:16px;background:#b0b0b0"></div>
<div class="a" style="left:643px;top:0px;width:14px;height:11px;background:#202020"></div>
<div class="a t" style="left:644px;top:2px;font-size:10px;color:#ececec">8</div>
<div class="a" style="left:738px;top:0px;width:1px;height:16px;background:#b0b0b0"></div>
<div class="a" style="left:739px;top:0px;width:14px;height:11px;background:#202020"></div>
<div class="a t" style="left:740px;top:2px;font-size:10px;color:#ececec">16</div>
<div class="a" style="left:834px;top:0px;width:1px;height:16px;background:#b0b0b0"></div>
<div class="a" style="left:835px;top:0px;width:14px;height:11px;background:#202020"></div>
<div class="a t" style="left:836px;top:2px;font-size:10px;color:#ececec">24</div>
<div class="a" style="left:930px;top:0px;width:1px;height:16px;background:#b0b0b0"></div>
<div class="a" style="left:931px;top:0px;width:14px;height:11px;background:#202020"></div>
<div class="a t" style="left:932px;top:2px;font-size:10px;color:#ececec">32</div>
<div class="a" style="left:1026px;top:0px;width:1px;height:16px;background:#b0b0b0"></div>
<div class="a" style="left:1027px;top:0px;width:14px;height:11px;background:#202020"></div>
<div class="a t" style="left:1028px;top:2px;font-size:10px;color:#ececec">40</div>
<div class="a" style="left:1122px;top:0px;width:1px;height:16px;background:#b0b0b0"></div>
<div class="a" style="left:1123px;top:0px;width:14px;height:11px;background:#202020"></div>
<div class="a t" style="left:1124px;top:2px;font-size:10px;color:#ececec">48</div>
<div class="a" style="left:1218px;top:0px;width:1px;height:16px;background:#b0b0b0"></div>
<div class="a" style="left:1219px;top:0px;width:14px;height:11px;background:#202020"></div>
<div class="a t" style="left:1220px;top:2px;font-size:10px;color:#ececec">56</div>
<div class="a" style="left:1314px;top:0px;width:1px;height:16px;background:#b0b0b0"></div>
<div class="a" style="left:1315px;top:0px;width:14px;height:11px;background:#202020"></div>
<div class="a t" style="left:1316px;top:2px;font-size:10px;color:#ececec">64</div>
<div class="a" style="left:1410px;top:0px;width:1px;height:16px;background:#b0b0b0"></div>
<div class="a" style="left:1411px;top:0px;width:14px;height:11px;background:#202020"></div>
<div class="a t" style="left:1412px;top:2px;font-size:10px;color:#ececec">72</div>
</div>
<div class="a" style="left:66px;top:138px;width:17px;height:881px;background:#202020;overflow:hidden">
<div class="a" style="left:0px;top:0px;width:1px;height:881px;background:#2c2c2c;"></div>
<div class="a" style="left:1px;top:0px;width:16px;height:37px;background:#5a5a5a;"></div>
<div class="a" style="left:1px;top:36px;width:16px;height:1px;background:#626262;"></div>
<div class="a" style="left:1px;top:200px;width:16px;height:8px;background:#5a5a5a;"></div>
<div class="a" style="left:1px;top:207px;width:16px;height:1px;background:#626262;"></div>
<div class="a" style="left:1px;top:371px;width:16px;height:7px;background:#5a5a5a;"></div>
<div class="a" style="left:1px;top:377px;width:16px;height:1px;background:#626262;"></div>
<div class="a" style="left:1px;top:541px;width:16px;height:7px;background:#5a5a5a;"></div>
<div class="a" style="left:1px;top:547px;width:16px;height:1px;background:#626262;"></div>
<div class="a" style="left:1px;top:711px;width:16px;height:8px;background:#5a5a5a;"></div>
<div class="a" style="left:1px;top:718px;width:16px;height:1px;background:#626262;"></div>
<div class="a" style="left:13px;top:42px;width:4px;height:158px;background:repeating-linear-gradient(180deg,#858585 0 1px,transparent 1px 6px)"></div>
<div class="a" style="left:1px;top:48px;width:16px;height:1px;background:#909090;"></div>
<div class="a" style="left:2px;top:50px;width:10px;height:9px;background:#202020;"></div>
<div class="a t" style="left:3px;top:49.5px;font-size:10px;color:#d8d8d8">0</div>
<div class="a" style="left:1px;top:144px;width:16px;height:1px;background:#909090;"></div>
<div class="a" style="left:2px;top:146px;width:10px;height:9px;background:#202020;"></div>
<div class="a t" style="left:3px;top:145.5px;font-size:10px;color:#d8d8d8">8</div>
<div class="a" style="left:13px;top:213px;width:4px;height:158px;background:repeating-linear-gradient(180deg,#858585 0 1px,transparent 1px 6px)"></div>
<div class="a" style="left:1px;top:219px;width:16px;height:1px;background:#909090;"></div>
<div class="a" style="left:2px;top:221px;width:10px;height:9px;background:#202020;"></div>
<div class="a t" style="left:3px;top:220.5px;font-size:10px;color:#d8d8d8">0</div>
<div class="a" style="left:1px;top:315px;width:16px;height:1px;background:#909090;"></div>
<div class="a" style="left:2px;top:317px;width:10px;height:9px;background:#202020;"></div>
<div class="a t" style="left:3px;top:316.5px;font-size:10px;color:#d8d8d8">8</div>
<div class="a" style="left:13px;top:383px;width:4px;height:158px;background:repeating-linear-gradient(180deg,#858585 0 1px,transparent 1px 6px)"></div>
<div class="a" style="left:1px;top:389px;width:16px;height:1px;background:#909090;"></div>
<div class="a" style="left:2px;top:391px;width:10px;height:9px;background:#202020;"></div>
<div class="a t" style="left:3px;top:390.5px;font-size:10px;color:#d8d8d8">0</div>
<div class="a" style="left:1px;top:485px;width:16px;height:1px;background:#909090;"></div>
<div class="a" style="left:2px;top:487px;width:10px;height:9px;background:#202020;"></div>
<div class="a t" style="left:3px;top:486.5px;font-size:10px;color:#d8d8d8">8</div>
<div class="a" style="left:13px;top:553px;width:4px;height:158px;background:repeating-linear-gradient(180deg,#858585 0 1px,transparent 1px 6px)"></div>
<div class="a" style="left:1px;top:559px;width:16px;height:1px;background:#909090;"></div>
<div class="a" style="left:2px;top:561px;width:10px;height:9px;background:#202020;"></div>
<div class="a t" style="left:3px;top:560.5px;font-size:10px;color:#d8d8d8">0</div>
<div class="a" style="left:1px;top:655px;width:16px;height:1px;background:#909090;"></div>
<div class="a" style="left:2px;top:657px;width:10px;height:9px;background:#202020;"></div>
<div class="a t" style="left:3px;top:656.5px;font-size:10px;color:#d8d8d8">8</div>
<div class="a" style="left:13px;top:724px;width:4px;height:157px;background:repeating-linear-gradient(180deg,#858585 0 1px,transparent 1px 6px)"></div>
<div class="a" style="left:1px;top:730px;width:16px;height:1px;background:#909090;"></div>
<div class="a" style="left:2px;top:732px;width:10px;height:9px;background:#202020;"></div>
<div class="a t" style="left:3px;top:731.5px;font-size:10px;color:#d8d8d8">0</div>
<div class="a" style="left:1px;top:826px;width:16px;height:1px;background:#909090;"></div>
<div class="a" style="left:2px;top:828px;width:10px;height:9px;background:#202020;"></div>
<div class="a t" style="left:3px;top:827.5px;font-size:10px;color:#d8d8d8">8</div>
</div>
<div class="a" style="left:66px;top:441px;width:17px;height:1px;background:repeating-linear-gradient(90deg,#d0d0d0 0 1px,transparent 1px 2px)"></div>
<div class="a" style="left:1168px;top:123px;width:1px;height:15px;background:repeating-linear-gradient(180deg,#e0e0e0 0 1px,transparent 1px 2px)"></div>
<div class="a" style="left:83px;top:138px;width:1491px;height:881px;background:#bbbbbb;overflow:hidden">
<div class="a" style="left:745px;top:48px;width:199px;height:142px;background:#ffffff;"></div>
<div class="a" style="left:753px;top:57px;width:91px;height:123.5px;background:#000;"></div>
<svg style="left:808px;top:86px" width="36" height="65" viewBox="0 0 36 65"><defs><filter id="nz" x="0" y="0" width="100%" height="100%"><feTurbulence type="fractalNoise" baseFrequency="0.9" numOctaves="2" seed="3"/><feColorMatrix type="matrix" values="0 0 0 0 0.7  0 0 0 0 0.7  0 0 0 0 0.7  0 0 0 0.55 0"/></filter></defs><rect width="36" height="65" fill="#b2b2b2"/><rect width="36" height="65" filter="url(#nz)" opacity="0.9"/></svg>
<svg style="left:844px;top:87px" width="53" height="64" viewBox="0 0 53 64"><defs><linearGradient id="mg" x1="0" y1="0" x2="1" y2="0"><stop offset="0" stop-color="#dcdcdc"/><stop offset="0.75" stop-color="#eeeeee"/><stop offset="1" stop-color="#ffffff"/></linearGradient><filter id="nz2" x="0" y="0" width="100%" height="100%"><feTurbulence type="fractalNoise" baseFrequency="0.7" numOctaves="2" seed="7"/><feColorMatrix type="matrix" values="0 0 0 0 0.55  0 0 0 0 0.55  0 0 0 0 0.55  0 0 0 0.5 0"/></filter></defs><rect width="53" height="64" fill="url(#mg)"/><rect width="50" height="64" filter="url(#nz2)" opacity="0.45"/><path d="M0 28 Q14 32 26 38 Q38 44 52 50 L52 55 Q38 49 26 44 Q12 38 0 35 Z" fill="#111"/><path d="M0 31.5 Q14 35 26 41 Q38 47 52 52" stroke="#e0e0e0" stroke-width="0.9" fill="none"/><path d="M0 39 Q10 42 20 46 Q34 52 52 56 L52 64 L0 64 Z" fill="#0c0c0c"/><path d="M0 46 Q10 48 20 54 Q30 60 40 64 L28 64 Q18 58 8 54 L0 52 Z" fill="#d8d8d8"/><path d="M22 19 Q28 21 34 27 Q36 29 38 29" stroke="#222" stroke-width="1.6" fill="none"/><path d="M10 8 Q14 10 18 11" stroke="#777" stroke-width="0.8" fill="none"/></svg>
<svg style="left:760px;top:101px" width="24" height="18" viewBox="0 0 24 18"><path d="M1 16.5 L16.5 1" stroke="#c4c4c4" stroke-width="1"/><rect x="20" y="8" width="1.5" height="1.5" fill="#ddd"/></svg>
<div class="a t" style="left:768.8px;top:114.6px;font-size:5.6px;color:#ffffff;font-weight:700;letter-spacing:0.1px;line-height:6px">FULL</div>
<div class="a t" style="left:768.8px;top:120.60000000000002px;font-size:5.6px;color:#ffffff;font-weight:700;letter-spacing:0.1px;line-height:6px">NAME</div>
<div class="a" style="left:769px;top:128px;width:24.5px;height:2.7px;background:#777777;"></div>
<div class="a" style="left:768px;top:132.5px;width:15px;height:1.3px;background:#8a8a8a;"></div>
<div class="a" style="left:768px;top:135px;width:26px;height:1.5px;background:#9a9a9a;"></div>
<div class="a" style="left:745px;top:48px;width:199px;height:142px;border:1px solid #3c3c3c"></div>
<div class="a" style="left:546px;top:219px;width:199px;height:141px;background:#000;"></div>
<div class="a" style="left:745px;top:219px;width:199px;height:141px;background:#fff;"></div>
<div class="a" style="left:560px;top:225.5px;width:16px;height:1.0px;background:#8c8c8c;"></div>
<div class="a" style="left:726px;top:225.5px;width:5.5px;height:1.0px;background:#8c8c8c;"></div>
<div class="a" style="left:635.5px;top:250px;width:20.5px;height:3px;background:#777;"></div>
<div class="a" style="left:636px;top:254.5px;width:19px;height:3.0px;background:#777;"></div>
<div class="a" style="left:596.5px;top:260px;width:99.5px;height:1px;background:#cfcfcf;"></div>
<div class="a" style="left:596px;top:263px;width:99.5px;height:5px;background:#7a7a7a;"></div>
<div class="a" style="left:633px;top:269px;width:25px;height:1.6px;background:#6a6a6a;"></div>
<div class="a" style="left:595px;top:277.5px;width:13px;height:1.5px;background:#7a7a7a;"></div>
<div class="a" style="left:633px;top:277.5px;width:25px;height:1.5px;background:#7a7a7a;"></div>
<div class="a" style="left:677px;top:277.5px;width:19px;height:1.5px;background:#7a7a7a;"></div>
<div class="a" style="left:567.5px;top:282px;width:156.3px;height:1px;background:#cfcfcf;"></div>
<div class="a" style="left:568px;top:287.7px;width:13px;height:2.0px;background:#6e6e6e;"></div>
<div class="a" style="left:668.7px;top:287.7px;width:6.3px;height:2.0px;background:#6e6e6e;"></div>
<div class="a" style="left:568px;top:292px;width:27px;height:1.5px;background:#707070;"></div>
<div class="a" style="left:568px;top:294.5px;width:10px;height:1.3px;background:#666;"></div>
<div class="a" style="left:568px;top:296.5px;width:4px;height:1.0px;background:#555;"></div>
<div class="a" style="left:600px;top:292px;width:27px;height:1.5px;background:#707070;"></div>
<div class="a" style="left:600px;top:294.5px;width:10px;height:1.3px;background:#666;"></div>
<div class="a" style="left:600px;top:296.5px;width:4px;height:1.0px;background:#555;"></div>
<div class="a" style="left:632px;top:292px;width:27px;height:1.5px;background:#707070;"></div>
<div class="a" style="left:632px;top:294.5px;width:10px;height:1.3px;background:#666;"></div>
<div class="a" style="left:632px;top:296.5px;width:4px;height:1.0px;background:#555;"></div>
<div class="a" style="left:668.7px;top:292px;width:8.3px;height:1.5px;background:#707070;"></div>
<div class="a" style="left:668.7px;top:295.0px;width:3.3px;height:1.0px;background:#5a5a5a;"></div>
<div class="a" style="left:668.7px;top:297.8px;width:6.3px;height:1.0px;background:#5a5a5a;"></div>
<div class="a" style="left:668.7px;top:300.6px;width:3.3px;height:1.0px;background:#5a5a5a;"></div>
<div class="a" style="left:668.7px;top:303.4px;width:6.3px;height:1.0px;background:#5a5a5a;"></div>
<div class="a" style="left:668.7px;top:306.2px;width:3.3px;height:1.0px;background:#5a5a5a;"></div>
<div class="a" style="left:668.7px;top:309.0px;width:6.3px;height:1.0px;background:#5a5a5a;"></div>
<div class="a" style="left:668.7px;top:311.5px;width:13.3px;height:1.5px;background:#666;"></div>
<div class="a" style="left:696px;top:292px;width:13px;height:1.5px;background:#707070;"></div>
<div class="a" style="left:696px;top:295px;width:16px;height:13.5px;background:#5e5e5e;background-image:repeating-linear-gradient(180deg,#888 0 1px,transparent 1px 2.2px)"></div>
<div class="a" style="left:568px;top:302px;width:14.5px;height:2px;background:#6e6e6e;"></div>
<div class="a" style="left:568px;top:306.5px;width:10px;height:1.5px;background:#6a6a6a;"></div>
<div class="a" style="left:568px;top:308.5px;width:11px;height:1.5px;background:#5a5a5a;"></div>
<div class="a" style="left:568px;top:310.5px;width:9px;height:1.0px;background:#4a4a4a;"></div>
<div class="a" style="left:600px;top:306.5px;width:10px;height:1.5px;background:#6a6a6a;"></div>
<div class="a" style="left:600px;top:308.5px;width:11px;height:1.5px;background:#5a5a5a;"></div>
<div class="a" style="left:600px;top:310.5px;width:9px;height:1.0px;background:#4a4a4a;"></div>
<div class="a" style="left:632px;top:306.5px;width:10px;height:1.5px;background:#6a6a6a;"></div>
<div class="a" style="left:632px;top:308.5px;width:11px;height:1.5px;background:#5a5a5a;"></div>
<div class="a" style="left:632px;top:310.5px;width:9px;height:1.0px;background:#4a4a4a;"></div>
<div class="a" style="left:668.7px;top:315px;width:12.8px;height:2.5px;background:#6a6a6a;"></div>
<div class="a" style="left:668.7px;top:318.5px;width:10.3px;height:1.3px;background:#5a5a5a;"></div>
<div class="a" style="left:668.7px;top:320.5px;width:18.3px;height:1.5px;background:#6a6a6a;"></div>
<div class="a" style="left:567.5px;top:329px;width:156.3px;height:1px;background:#cfcfcf;"></div>
<div class="a" style="left:758.5px;top:225px;width:15.5px;height:1.5px;background:#555;"></div>
<div class="a" style="left:923px;top:225px;width:7px;height:1.5px;background:#555;"></div>
<div class="a t" style="left:771px;top:256px;font-size:7.5px;color:#000;font-weight:700;letter-spacing:-0.15px;line-height:8px">CONTENT</div>
<div class="a t" style="left:771px;top:269.6px;font-size:6.2px;color:#111;font-weight:700;line-height:6px;letter-spacing:-0.3px">01</div>
<div class="a" style="left:771px;top:276.1px;width:13px;height:3.7px;background:#6c6c6c;"></div>
<div class="a" style="left:771px;top:281.1px;width:10px;height:2.5px;background:#6c6c6c;"></div>
<div class="a" style="left:789px;top:277.4px;width:19px;height:1.1px;background:#bdbdbd;"></div>
<div class="a t" style="left:771px;top:291.90000000000003px;font-size:6.2px;color:#111;font-weight:700;line-height:6px;letter-spacing:-0.3px">02</div>
<div class="a" style="left:771px;top:298.4px;width:13px;height:3.7px;background:#6c6c6c;"></div>
<div class="a" style="left:771px;top:303.4px;width:10px;height:2.5px;background:#6c6c6c;"></div>
<div class="a" style="left:789px;top:299.7px;width:19px;height:1.1px;background:#bdbdbd;"></div>
<div class="a t" style="left:771px;top:314.20000000000005px;font-size:6.2px;color:#111;font-weight:700;line-height:6px;letter-spacing:-0.3px">03</div>
<div class="a" style="left:771px;top:320.7px;width:13px;height:3.7px;background:#6c6c6c;"></div>
<div class="a" style="left:771px;top:325.7px;width:10px;height:2.5px;background:#6c6c6c;"></div>
<div class="a" style="left:789px;top:322.0px;width:19px;height:1.1px;background:#bdbdbd;"></div>
<div class="a t" style="left:827px;top:269.6px;font-size:6.2px;color:#111;font-weight:700;line-height:6px;letter-spacing:-0.3px">04</div>
<div class="a" style="left:827px;top:276.1px;width:13px;height:3.7px;background:#6c6c6c;"></div>
<div class="a" style="left:827px;top:281.1px;width:10px;height:2.5px;background:#6c6c6c;"></div>
<div class="a" style="left:845px;top:277.4px;width:19px;height:1.1px;background:#9a9a9a;"></div>
<div class="a t" style="left:827px;top:291.90000000000003px;font-size:6.2px;color:#111;font-weight:700;line-height:6px;letter-spacing:-0.3px">05</div>
<div class="a" style="left:827px;top:298.4px;width:13px;height:3.7px;background:#6c6c6c;"></div>
<div class="a" style="left:827px;top:303.4px;width:10px;height:2.5px;background:#6c6c6c;"></div>
<div class="a" style="left:845px;top:299.7px;width:19px;height:1.1px;background:#9a9a9a;"></div>
<div class="a t" style="left:827px;top:314.20000000000005px;font-size:6.2px;color:#111;font-weight:700;line-height:6px;letter-spacing:-0.3px">06</div>
<div class="a" style="left:827px;top:320.7px;width:13px;height:3.7px;background:#6c6c6c;"></div>
<div class="a" style="left:827px;top:325.7px;width:10px;height:2.5px;background:#6c6c6c;"></div>
<div class="a" style="left:845px;top:322.0px;width:19px;height:1.1px;background:#9a9a9a;"></div>
<div class="a" style="left:546px;top:219px;width:398px;height:141px;border:1px solid #3c3c3c"></div>
<div class="a" style="left:546px;top:389px;width:96.3px;height:141px;background:#fff;"></div>
<div class="a" style="left:642.3px;top:389px;width:102.7px;height:141px;background:#000;"></div>
<div class="a" style="left:745px;top:389px;width:199px;height:141px;background:#e1e0e0;"></div>
<div class="a" style="left:560px;top:395.5px;width:15.5px;height:1.3px;background:#555;"></div>
<div class="a" style="left:560.3px;top:404px;width:70.2px;height:53.5px;background:#e1e0e0;"></div>
<div class="a" style="left:560.3px;top:462px;width:70.2px;height:53px;background:#e1e0e0;"></div>
<div class="a" style="left:718px;top:395.5px;width:13.6px;height:1.0px;background:#777;"></div>
<svg style="left:656px;top:409px" width="17" height="17" viewBox="0 0 17 17"><path d="M0.5 16.5 L16.5 0.5" stroke="#bdbdbd" stroke-width="0.9"/></svg>
<div class="a t" style="left:663.5px;top:422.5px;font-size:9.3px;color:#d6d6d6;font-weight:700;line-height:9px;letter-spacing:-0.25px">Project</div>
<div class="a t" style="left:663.5px;top:431.79999999999995px;font-size:9.3px;color:#d6d6d6;font-weight:700;line-height:9px;letter-spacing:-0.25px">Name</div>
<div class="a" style="left:663.7px;top:445px;width:9.3px;height:1.6px;background:#9a9a9a;"></div>
<div class="a" style="left:663.7px;top:448px;width:5.3px;height:1.8px;background:#9a9a9a;"></div>
<div class="a" style="left:663px;top:451.6px;width:60.8px;height:1.4px;background:#8a8a8a;"></div>
<div class="a" style="left:663px;top:471.7px;width:24.8px;height:2.1px;background:#7a7a7a;"></div>
<div class="a" style="left:663px;top:476.6px;width:27.6px;height:1.4px;background:#7a7a7a;"></div>
<div class="a" style="left:663px;top:479.2px;width:60.8px;height:1.4px;background:#8a8a8a;"></div>
<div class="a" style="left:663px;top:481.3px;width:60.8px;height:1.4px;background:#8a8a8a;"></div>
<div class="a" style="left:663px;top:483.4px;width:60.8px;height:1.4px;background:#8a8a8a;"></div>
<div class="a" style="left:663px;top:485.5px;width:60.8px;height:1.4px;background:#8a8a8a;"></div>
<div class="a" style="left:663px;top:487.6px;width:60.8px;height:1.4px;background:#8a8a8a;"></div>
<div class="a" style="left:663px;top:489.7px;width:60.8px;height:1.4px;background:#8a8a8a;"></div>
<div class="a" style="left:663px;top:491.8px;width:60.8px;height:1.4px;background:#8a8a8a;"></div>
<div class="a" style="left:663px;top:494px;width:48px;height:2px;background:#7e7e7e;"></div>
<div class="a" style="left:692.8px;top:503.6px;width:1.2px;height:1.2px;background:#cccccc;"></div>
<div class="a" style="left:725px;top:524px;width:6.6px;height:1px;background:#888;"></div>
<div class="a" style="left:546px;top:389px;width:398px;height:141px;border:1px solid #3c3c3c"></div>
<div class="a" style="left:546px;top:730px;width:96.3px;height:141px;background:#fff;"></div>
<div class="a" style="left:642.3px;top:730px;width:102.7px;height:141px;background:#000;"></div>
<div class="a" style="left:745px;top:730px;width:199px;height:141px;background:#e1e0e0;"></div>
<div class="a" style="left:560px;top:736.5px;width:15.5px;height:1.3px;background:#555;"></div>
<div class="a" style="left:560.3px;top:745px;width:70.2px;height:53.5px;background:#e1e0e0;"></div>
<div class="a" style="left:560.3px;top:803px;width:70.2px;height:53px;background:#e1e0e0;"></div>
<div class="a" style="left:718px;top:736.5px;width:13.6px;height:1.0px;background:#777;"></div>
<svg style="left:656px;top:750px" width="17" height="17" viewBox="0 0 17 17"><path d="M0.5 16.5 L16.5 0.5" stroke="#bdbdbd" stroke-width="0.9"/></svg>
<div class="a t" style="left:663.5px;top:763.5px;font-size:9.3px;color:#d6d6d6;font-weight:700;line-height:9px;letter-spacing:-0.25px">Project</div>
<div class="a t" style="left:663.5px;top:772.8px;font-size:9.3px;color:#d6d6d6;font-weight:700;line-height:9px;letter-spacing:-0.25px">Name</div>
<div class="a" style="left:663.7px;top:786px;width:9.3px;height:1.6px;background:#9a9a9a;"></div>
<div class="a" style="left:663.7px;top:789px;width:5.3px;height:1.8px;background:#9a9a9a;"></div>
<div class="a" style="left:663px;top:792.6px;width:60.8px;height:1.4px;background:#8a8a8a;"></div>
<div class="a" style="left:663px;top:812.7px;width:24.8px;height:2.1px;background:#7a7a7a;"></div>
<div class="a" style="left:663px;top:817.6px;width:27.6px;height:1.4px;background:#7a7a7a;"></div>
<div class="a" style="left:663px;top:820.2px;width:60.8px;height:1.4px;background:#8a8a8a;"></div>
<div class="a" style="left:663px;top:822.3px;width:60.8px;height:1.4px;background:#8a8a8a;"></div>
<div class="a" style="left:663px;top:824.4px;width:60.8px;height:1.4px;background:#8a8a8a;"></div>
<div class="a" style="left:663px;top:826.5px;width:60.8px;height:1.4px;background:#8a8a8a;"></div>
<div class="a" style="left:663px;top:828.6px;width:60.8px;height:1.4px;background:#8a8a8a;"></div>
<div class="a" style="left:663px;top:830.7px;width:60.8px;height:1.4px;background:#8a8a8a;"></div>
<div class="a" style="left:663px;top:832.8px;width:60.8px;height:1.4px;background:#8a8a8a;"></div>
<div class="a" style="left:663px;top:835px;width:48px;height:2px;background:#7e7e7e;"></div>
<div class="a" style="left:692.8px;top:844.6px;width:1.2px;height:1.2px;background:#cccccc;"></div>
<div class="a" style="left:725px;top:865px;width:6.6px;height:1px;background:#888;"></div>
<div class="a" style="left:546px;top:730px;width:398px;height:141px;border:1px solid #3c3c3c"></div>
<div class="a" style="left:546px;top:559px;width:398px;height:142px;background:#fff;"></div>
<div class="a" style="left:560px;top:566px;width:15.4px;height:1px;background:#555;"></div>
<div class="a" style="left:721px;top:566px;width:10.6px;height:1px;background:#555;"></div>
<div class="a" style="left:560px;top:574.3px;width:28px;height:1.7px;background:#5a5a5a;"></div>
<div class="a" style="left:560px;top:578px;width:81.6px;height:44px;background:#e1e0e0;"></div>
<div class="a" style="left:560px;top:623px;width:77px;height:1.8px;background:#6a6a6a;"></div>
<div class="a" style="left:560px;top:625.6px;width:81px;height:1.8px;background:#6a6a6a;"></div>
<div class="a" style="left:560px;top:628px;width:43px;height:1.8px;background:#6a6a6a;"></div>
<div class="a" style="left:560px;top:635px;width:28px;height:1.7px;background:#5a5a5a;"></div>
<div class="a" style="left:560px;top:639.3px;width:81.6px;height:43.8px;background:#e1e0e0;"></div>
<div class="a" style="left:600.5px;top:686.3px;width:1.0px;height:0.7px;background:#888;"></div>
<div class="a" style="left:649.6px;top:574.3px;width:28.0px;height:1.7px;background:#5a5a5a;"></div>
<div class="a" style="left:649.6px;top:578px;width:81.6px;height:44px;background:#e1e0e0;"></div>
<div class="a" style="left:649.6px;top:623px;width:77.0px;height:1.8px;background:#6a6a6a;"></div>
<div class="a" style="left:649.6px;top:625.6px;width:81.0px;height:1.8px;background:#6a6a6a;"></div>
<div class="a" style="left:649.6px;top:628px;width:43.0px;height:1.8px;background:#6a6a6a;"></div>
<div class="a" style="left:649.6px;top:635px;width:28.0px;height:1.7px;background:#5a5a5a;"></div>
<div class="a" style="left:649.6px;top:639.3px;width:81.6px;height:43.8px;background:#e1e0e0;"></div>
<div class="a" style="left:690.1px;top:686.3px;width:1.0px;height:0.7px;background:#888;"></div>
<div class="a" style="left:726px;top:694px;width:5px;height:1px;background:#666;"></div>
<div class="a" style="left:758.4px;top:566px;width:14.9px;height:1px;background:#555;"></div>
<div class="a" style="left:919.6px;top:566px;width:9.9px;height:1px;background:#555;"></div>
<div class="a" style="left:758.4px;top:574.3px;width:13.6px;height:1.7px;background:#5a5a5a;"></div>
<div class="a" style="left:758.4px;top:578px;width:70px;height:72.6px;border:1px solid #f0f0f0"></div>
<div class="a" style="left:758.4px;top:654px;width:33.6px;height:25px;background:#e1e0e0;"></div>
<div class="a" style="left:795px;top:654px;width:33px;height:25px;background:#e1e0e0;"></div>
<div class="a" style="left:758.4px;top:681.4px;width:24.6px;height:1.6px;background:#6a6a6a;"></div>
<div class="a" style="left:795px;top:681.4px;width:25px;height:1.6px;background:#6a6a6a;"></div>
<div class="a" style="left:833.8px;top:574.3px;width:20.0px;height:1.7px;background:#5a5a5a;"></div>
<div class="a" style="left:833.8px;top:578px;width:95.7px;height:51.8px;background:#e1e0e0;"></div>
<div class="a" style="left:833.8px;top:635.7px;width:19.2px;height:1.7px;background:#5a5a5a;"></div>
<div class="a" style="left:833.8px;top:639.3px;width:95.7px;height:38.9px;background:#e1e0e0;"></div>
<div class="a" style="left:833.8px;top:678.2px;width:95.7px;height:4.9px;background:#000;"></div>
<div class="a" style="left:793px;top:686.3px;width:1px;height:0.7px;background:#888;"></div>
<div class="a" style="left:879px;top:686.3px;width:1px;height:0.7px;background:#888;"></div>
<div class="a" style="left:924.5px;top:694px;width:5.0px;height:1px;background:#666;"></div>
<div class="a" style="left:745px;top:559px;width:1px;height:142px;background:#3c3c3c;"></div>
<div class="a" style="left:546px;top:559px;width:398px;height:142px;border:1px solid #3c3c3c"></div>
</div>
<div class="a" style="left:1574px;top:122px;width:15px;height:897px;background:#4a4a4a;"></div>
<div class="a" style="left:1575px;top:138px;width:13px;height:293px;background:#656565;border-radius:7px"></div>
<svg style="left:1577px;top:127px" width="10" height="6" viewBox="0 0 10 6"><path d="M1 5 L5 1 L9 5" stroke="#8a8a8a" stroke-width="1.2" fill="none"/></svg>
<svg style="left:1577px;top:1009px" width="10" height="6" viewBox="0 0 10 6"><path d="M1 1 L5 5 L9 1" stroke="#8a8a8a" stroke-width="1.2" fill="none"/></svg>
<div class="a" style="left:1589px;top:93px;width:3px;height:926px;background:#3a3a3a;"></div>
<div class="a" style="left:1592px;top:93px;width:319px;height:13px;background:#3f3f3f;"></div>
<svg style="left:1616px;top:96px" width="8" height="7" viewBox="0 0 8 7"><path d="M3.5 0.5 L0.5 3.5 L3.5 6.5 Z M7.5 0.5 L4.5 3.5 L7.5 6.5 Z" fill="#d8d8d8"/></svg>
<svg style="left:1859px;top:96px" width="8" height="7" viewBox="0 0 8 7"><path d="M0.5 0.5 L3.5 3.5 L0.5 6.5 Z M4.5 0.5 L7.5 3.5 L4.5 6.5 Z" fill="#d8d8d8"/></svg>
<svg style="left:1899px;top:96px" width="8" height="7" viewBox="0 0 8 7"><path d="M3.5 0.5 L0.5 3.5 L3.5 6.5 Z M7.5 0.5 L4.5 3.5 L7.5 6.5 Z" fill="#d8d8d8"/></svg>
<div class="a" style="left:1592px;top:106px;width:38px;height:913px;background:#535353;"></div>
<div class="a" style="left:1601px;top:108px;width:20px;height:4px;background:repeating-linear-gradient(90deg,#7a7a7a 0 1px,transparent 1px 2px)"></div>
<svg style="left:1602px;top:118px" width="22" height="20" viewBox="0 0 22 20"><path d="M10 14 L15 1.5 L20 14 M11.8 9.5 H18.2" stroke="#cdcdcd" stroke-width="1.5" fill="none"/><rect x="1" y="11" width="6" height="6" stroke="#cdcdcd" stroke-width="1.3" fill="none"/><rect x="4" y="14" width="6" height="5" stroke="#cdcdcd" stroke-width="1.3" fill="#535353"/></svg>
<svg style="left:1602px;top:144px" width="22" height="20" viewBox="0 0 22 20"><path d="M16 1.5 V16 M19.5 1.5 V16" stroke="#cdcdcd" stroke-width="1.4"/><path d="M19.5 1.5 H15 A4 4 0 0 0 15 9.5 H16" fill="#cdcdcd"/><rect x="1" y="11" width="6" height="6" stroke="#cdcdcd" stroke-width="1.3" fill="none"/><rect x="4" y="14" width="6" height="5" stroke="#cdcdcd" stroke-width="1.3" fill="#535353"/></svg>
<div class="a" style="left:1592px;top:173px;width:38px;height:1px;background:#3f3f3f;"></div>
<div class="a" style="left:1630px;top:93px;width:2px;height:926px;background:#3a3a3a;"></div>
<div class="a" style="left:1632px;top:106px;width:240px;height:913px;background:#535353;"></div>
<div class="a" style="left:1693px;top:106px;width:179px;height:27px;background:#454545;"></div>
<div class="a" style="left:1749px;top:108px;width:1px;height:25px;background:#3e3e3e;"></div>
<div class="a" style="left:1802px;top:108px;width:1px;height:25px;background:#3e3e3e;"></div>
<svg style="left:1640px;top:114px" width="6" height="11" viewBox="0 0 6 11"><path d="M0.8 4 L3 1.5 L5.2 4 M0.8 7 L3 9.5 L5.2 7" stroke="#cfcfcf" stroke-width="1.1" fill="none"/></svg>
<div class="a t" style="left:1650px;top:115px;font-size:10.5px;color:#f2f2f2;font-weight:700;">Pages</div>
<div class="a t" style="left:1705px;top:115px;font-size:10.5px;color:#bfbfbf;font-weight:700;">Layers</div>
<div class="a t" style="left:1763px;top:115px;font-size:10.5px;color:#bfbfbf;font-weight:700;">Links</div>
<svg style="left:1856px;top:116px" width="11" height="8" viewBox="0 0 11 8"><path d="M0 0.5 H11 M0 2.8 H11 M0 5.1 H11 M0 7.4 H11" stroke="#cfcfcf" stroke-width="0.9"/></svg>
<div class="a t" style="left:1635px;top:143px;font-size:10px;color:#e4e4e4;font-weight:400;">[None]</div>
<div class="a" style="left:1817px;top:138px;width:34px;height:22px;background:#ffffff;"></div>
<div class="a t" style="left:1635px;top:172px;font-size:10px;color:#e4e4e4;font-weight:400;">A-Parent</div>
<div class="a" style="left:1783px;top:167px;width:33px;height:22px;background:#ffffff;"></div>
<div class="a" style="left:1817px;top:167px;width:34px;height:22px;background:#ffffff;"></div>
<div class="a" style="left:1632px;top:216px;width:240px;height:1px;background:#5f5f5f;"></div>
<div class="a" style="left:1859px;top:217px;width:13px;height:764px;background:#4f4f4f;"></div>
<svg style="left:1861px;top:224px" width="10" height="6" viewBox="0 0 10 6"><path d="M1 5 L5 1 L9 5" stroke="#9a9a9a" stroke-width="1.2" fill="none"/></svg>
<div class="a" style="left:1860px;top:233px;width:11px;height:578px;background:#6a6a6a;border-radius:6px"></div>
<svg style="left:1861px;top:972px" width="10" height="6" viewBox="0 0 10 6"><path d="M1 1 L5 5 L9 1" stroke="#9a9a9a" stroke-width="1.2" fill="none"/></svg>
<div class="a" style="left:1632px;top:217px;width:227px;height:764px;overflow:hidden">
<div class="a" style="left:113px;top:5px;width:1px;height:759px;background:#cfcfcf;"></div>
<svg style="left:133px;top:5px" width="11" height="6" viewBox="0 0 11 6"><path d="M0 0 H11 L5.5 5.5 Z" fill="#cfcfcf"/></svg>
<div class="a" style="left:114px;top:11.5px;width:50px;height:34.5px;background:#ffffff;"></div>
<div class="a" style="left:114px;top:11.5px;width:24px;height:34.5px;background:#000;"></div>
<div class="a" style="left:129px;top:19px;width:9px;height:18px;background:#b4b4b4;"></div>
<svg style="left:138px;top:19px" width="14" height="18" viewBox="0 0 14 18"><defs><linearGradient id="tg" x1="0" x2="1"><stop offset="0" stop-color="#e4e4e4"/><stop offset="1" stop-color="#fff"/></linearGradient></defs><rect width="14" height="18" fill="url(#tg)"/><path d="M0 8 Q7 10 13 13 L13 15.5 Q6 12 0 10.5 Z M0 12 Q7 14 13 17 L13 18 L0 18 Z" fill="#111"/></svg>
<svg style="left:115px;top:21px" width="10" height="14" viewBox="0 0 10 14"><path d="M1 7 L5 3" stroke="#ccc" stroke-width="0.8"/><rect x="3" y="6" width="5" height="4" fill="#e8e8e8"/><rect x="3" y="11" width="6" height="1.5" fill="#aaa"/></svg>
<div class="a" style="left:113px;top:46px;width:1px;height:7px;background:#cfcfcf;"></div>
<div class="a" style="left:98px;top:52px;width:30px;height:16px;background:#535353;"></div>
<div class="a t" style="left:133.5px;top:56px;font-size:10px;color:#e8e8e8;font-weight:700;">1</div>
<div class="a" style="left:62.5px;top:75.5px;width:50.5px;height:35.0px;background:#163f7a;"></div>
<div class="a" style="left:114px;top:75.5px;width:50px;height:35.0px;background:#9cc7f7;"></div>
<div class="a" style="left:62.5px;top:75.5px;width:101.5px;height:35px;border:1px solid #a9c4e6"></div>
<div class="a" style="left:87px;top:81px;width:5px;height:1px;background:#a8c8f0;"></div>
<div class="a" style="left:84px;top:84px;width:15px;height:1.5px;background:#a8c8f0;"></div>
<div class="a" style="left:77px;top:87px;width:31px;height:0.8px;background:#a8c8f0;"></div>
<div class="a" style="left:81px;top:88.5px;width:23px;height:1.0px;background:#a8c8f0;"></div>
<div class="a" style="left:68px;top:91.5px;width:40px;height:0.7px;background:#a8c8f0;"></div>
<div class="a" style="left:67px;top:94px;width:6px;height:2px;background:#a8c8f0;"></div>
<div class="a" style="left:67px;top:101px;width:2px;height:2px;background:#a8c8f0;"></div>
<div class="a" style="left:75px;top:94px;width:6px;height:2px;background:#a8c8f0;"></div>
<div class="a" style="left:75px;top:101px;width:2px;height:2px;background:#a8c8f0;"></div>
<div class="a" style="left:82px;top:94px;width:6px;height:2px;background:#a8c8f0;"></div>
<div class="a" style="left:82px;top:101px;width:2px;height:2px;background:#a8c8f0;"></div>
<div class="a" style="left:89px;top:94px;width:6px;height:2px;background:#a8c8f0;"></div>
<div class="a" style="left:89px;top:101px;width:2px;height:2px;background:#a8c8f0;"></div>
<div class="a" style="left:98px;top:94px;width:4px;height:9px;background:#a8c8f0;"></div>
<div class="a" style="left:104px;top:95px;width:4px;height:4px;background:#a8c8f0;"></div>
<div class="a" style="left:68px;top:104.5px;width:40px;height:0.8px;background:#a8c8f0;"></div>
<div class="a" style="left:118px;top:88.0px;width:3px;height:3.0px;background:#2c5a9a;"></div>
<div class="a" style="left:123px;top:88.5px;width:4px;height:0.7px;background:#6b96cc;"></div>
<div class="a" style="left:118px;top:93.8px;width:3px;height:3.0px;background:#2c5a9a;"></div>
<div class="a" style="left:123px;top:94.3px;width:4px;height:0.7px;background:#6b96cc;"></div>
<div class="a" style="left:118px;top:99.6px;width:3px;height:3.0px;background:#2c5a9a;"></div>
<div class="a" style="left:123px;top:100.1px;width:4px;height:0.7px;background:#6b96cc;"></div>
<div class="a" style="left:133px;top:88.0px;width:3px;height:3.0px;background:#2c5a9a;"></div>
<div class="a" style="left:138px;top:88.5px;width:4px;height:0.7px;background:#6b96cc;"></div>
<div class="a" style="left:133px;top:93.8px;width:3px;height:3.0px;background:#2c5a9a;"></div>
<div class="a" style="left:138px;top:94.3px;width:4px;height:0.7px;background:#6b96cc;"></div>
<div class="a" style="left:133px;top:99.6px;width:3px;height:3.0px;background:#2c5a9a;"></div>
<div class="a" style="left:138px;top:100.1px;width:4px;height:0.7px;background:#6b96cc;"></div>
<div class="a" style="left:119px;top:82.5px;width:7px;height:1.0px;background:#1f4f90;"></div>
<div class="a" style="left:100px;top:116px;width:23px;height:14px;background:#2b7de0;"></div>
<div class="a t" style="left:103px;top:119px;font-size:10px;color:#ffffff;font-weight:700;">2-3</div>
<div class="a" style="left:63px;top:139.5px;width:50px;height:35.0px;background:#ffffff;"></div>
<div class="a" style="left:64px;top:142.0px;width:20.5px;height:13.5px;background:#e2e2e2;"></div>
<div class="a" style="left:64px;top:157.0px;width:20.5px;height:14.0px;background:#e2e2e2;"></div>
<div class="a" style="left:87px;top:139.5px;width:26px;height:35.0px;background:#000;"></div>
<div class="a" style="left:90px;top:142.5px;width:2px;height:1.0px;background:#aaa;"></div>
<div class="a" style="left:92px;top:145.5px;width:7px;height:5.0px;background:#dcdcdc;"></div>
<div class="a" style="left:92px;top:152.5px;width:2px;height:1.0px;background:#ccc;"></div>
<div class="a" style="left:92px;top:154.5px;width:16px;height:0.6px;background:#aaa;"></div>
<div class="a" style="left:92px;top:159.5px;width:6px;height:1.0px;background:#bbb;"></div>
<div class="a" style="left:92px;top:161.5px;width:16px;height:6.0px;background:#aaa;"></div>
<div class="a" style="left:97px;top:169.5px;width:2px;height:1.0px;background:#aaa;"></div>
<div class="a" style="left:114px;top:139.5px;width:50px;height:35.0px;background:#e0e0e0;"></div>
<div class="a" style="left:63px;top:139.5px;width:10px;height:11.0px;background:#ffffff;"></div>
<div class="a" style="left:153px;top:139.5px;width:11px;height:11.0px;background:#ffffff;"></div>
<div class="a t" style="left:63.3px;top:141.0px;font-size:10.5px;color:#000;font-weight:400;">A</div>
<div class="a t" style="left:153.8px;top:141.0px;font-size:10.5px;color:#000;font-weight:400;">A</div>
<div class="a" style="left:113px;top:139.5px;width:1px;height:35.0px;background:#d0d0d0;"></div>
<div class="a" style="left:98px;top:179.5px;width:30px;height:17.0px;background:#535353;"></div>
<div class="a t" style="left:103.78px;top:184.0px;font-size:10px;color:#e8e8e8;font-weight:400;">4-5</div>
<div class="a" style="left:63px;top:203.5px;width:50px;height:35.0px;background:#ffffff;"></div>
<div class="a" style="left:114px;top:203.5px;width:50px;height:35.0px;background:#ffffff;"></div>
<div class="a" style="left:64px;top:206.5px;width:22px;height:11.5px;background:#e2e2e2;"></div>
<div class="a" style="left:64px;top:218.5px;width:22px;height:0.8px;background:#8a8a8a;"></div>
<div class="a" style="left:64px;top:219.8px;width:12px;height:0.7px;background:#9a9a9a;"></div>
<div class="a" style="left:64px;top:222.0px;width:8px;height:0.7px;background:#aaa;"></div>
<div class="a" style="left:64px;top:223.5px;width:22px;height:11.5px;background:#e2e2e2;"></div>
<div class="a" style="left:88px;top:206.5px;width:22px;height:11.5px;background:#e2e2e2;"></div>
<div class="a" style="left:88px;top:218.5px;width:22px;height:0.8px;background:#8a8a8a;"></div>
<div class="a" style="left:88px;top:219.8px;width:12px;height:0.7px;background:#9a9a9a;"></div>
<div class="a" style="left:88px;top:222.0px;width:8px;height:0.7px;background:#aaa;"></div>
<div class="a" style="left:88px;top:223.5px;width:22px;height:11.5px;background:#e2e2e2;"></div>
<div class="a" style="left:116px;top:206.0px;width:18px;height:23px;border:1px solid #eeeeee"></div>
<div class="a" style="left:116px;top:228.5px;width:8.5px;height:7.0px;background:#e8e8e8;"></div>
<div class="a" style="left:125.5px;top:228.5px;width:8.5px;height:7.0px;background:#e8e8e8;"></div>
<div class="a" style="left:136px;top:206.0px;width:25px;height:14.0px;background:#e2e2e2;"></div>
<div class="a" style="left:136px;top:222.0px;width:6px;height:0.7px;background:#aaa;"></div>
<div class="a" style="left:136px;top:223.0px;width:25px;height:10.0px;background:#e2e2e2;"></div>
<div class="a" style="left:136px;top:233.0px;width:25px;height:1.5px;background:#000;"></div>
<div class="a" style="left:63px;top:203.5px;width:10px;height:11.0px;background:#ffffff;"></div>
<div class="a" style="left:153px;top:203.5px;width:11px;height:11.0px;background:#ffffff;"></div>
<div class="a t" style="left:63.3px;top:205.0px;font-size:10.5px;color:#000;font-weight:400;">A</div>
<div class="a t" style="left:153.8px;top:205.0px;font-size:10.5px;color:#000;font-weight:400;">A</div>
<div class="a" style="left:113px;top:203.5px;width:1px;height:35.0px;background:#d0d0d0;"></div>
<div class="a" style="left:98px;top:243.5px;width:30px;height:17.0px;background:#535353;"></div>
<div class="a t" style="left:103.78px;top:248.0px;font-size:10px;color:#e8e8e8;font-weight:400;">6-7</div>
<div class="a" style="left:63px;top:267.5px;width:50px;height:35.0px;background:#ffffff;"></div>
<div class="a" style="left:64px;top:270.0px;width:20.5px;height:13.5px;background:#e2e2e2;"></div>
<div class="a" style="left:64px;top:285.0px;width:20.5px;height:14.0px;background:#e2e2e2;"></div>
<div class="a" style="left:87px;top:267.5px;width:26px;height:35.0px;background:#000;"></div>
<div class="a" style="left:90px;top:270.5px;width:2px;height:1.0px;background:#aaa;"></div>
<div class="a" style="left:92px;top:273.5px;width:7px;height:5.0px;background:#dcdcdc;"></div>
<div class="a" style="left:92px;top:280.5px;width:2px;height:1.0px;background:#ccc;"></div>
<div class="a" style="left:92px;top:282.5px;width:16px;height:0.6px;background:#aaa;"></div>
<div class="a" style="left:92px;top:287.5px;width:6px;height:1.0px;background:#bbb;"></div>
<div class="a" style="left:92px;top:289.5px;width:16px;height:6.0px;background:#aaa;"></div>
<div class="a" style="left:97px;top:297.5px;width:2px;height:1.0px;background:#aaa;"></div>
<div class="a" style="left:114px;top:267.5px;width:50px;height:35.0px;background:#e0e0e0;"></div>
<div class="a" style="left:63px;top:267.5px;width:10px;height:11.0px;background:#ffffff;"></div>
<div class="a" style="left:153px;top:267.5px;width:11px;height:11.0px;background:#ffffff;"></div>
<div class="a t" style="left:63.3px;top:269.0px;font-size:10.5px;color:#000;font-weight:400;">A</div>
<div class="a t" style="left:153.8px;top:269.0px;font-size:10.5px;color:#000;font-weight:400;">A</div>
<div class="a" style="left:113px;top:267.5px;width:1px;height:35.0px;background:#d0d0d0;"></div>
<div class="a" style="left:98px;top:307.5px;width:30px;height:17.0px;background:#535353;"></div>
<div class="a t" style="left:103.78px;top:312.0px;font-size:10px;color:#e8e8e8;font-weight:400;">8-9</div>
<div class="a" style="left:63px;top:331.5px;width:50px;height:35.0px;background:#ffffff;"></div>
<div class="a" style="left:114px;top:331.5px;width:50px;height:35.0px;background:#ffffff;"></div>
<div class="a" style="left:64px;top:334.5px;width:22px;height:11.5px;background:#e2e2e2;"></div>
<div class="a" style="left:64px;top:346.5px;width:22px;height:0.8px;background:#8a8a8a;"></div>
<div class="a" style="left:64px;top:347.8px;width:12px;height:0.7px;background:#9a9a9a;"></div>
<div class="a" style="left:64px;top:350.0px;width:8px;height:0.7px;background:#aaa;"></div>
<div class="a" style="left:64px;top:351.5px;width:22px;height:11.5px;background:#e2e2e2;"></div>
<div class="a" style="left:88px;top:334.5px;width:22px;height:11.5px;background:#e2e2e2;"></div>
<div class="a" style="left:88px;top:346.5px;width:22px;height:0.8px;background:#8a8a8a;"></div>
<div class="a" style="left:88px;top:347.8px;width:12px;height:0.7px;background:#9a9a9a;"></div>
<div class="a" style="left:88px;top:350.0px;width:8px;height:0.7px;background:#aaa;"></div>
<div class="a" style="left:88px;top:351.5px;width:22px;height:11.5px;background:#e2e2e2;"></div>
<div class="a" style="left:116px;top:334.0px;width:18px;height:23px;border:1px solid #eeeeee"></div>
<div class="a" style="left:116px;top:356.5px;width:8.5px;height:7.0px;background:#e8e8e8;"></div>
<div class="a" style="left:125.5px;top:356.5px;width:8.5px;height:7.0px;background:#e8e8e8;"></div>
<div class="a" style="left:136px;top:334.0px;width:25px;height:14.0px;background:#e2e2e2;"></div>
<div class="a" style="left:136px;top:350.0px;width:6px;height:0.7px;background:#aaa;"></div>
<div class="a" style="left:136px;top:351.0px;width:25px;height:10.0px;background:#e2e2e2;"></div>
<div class="a" style="left:136px;top:361.0px;width:25px;height:1.5px;background:#000;"></div>
<div class="a" style="left:63px;top:331.5px;width:10px;height:11.0px;background:#ffffff;"></div>
<div class="a" style="left:153px;top:331.5px;width:11px;height:11.0px;background:#ffffff;"></div>
<div class="a t" style="left:63.3px;top:333.0px;font-size:10.5px;color:#000;font-weight:400;">A</div>
<div class="a t" style="left:153.8px;top:333.0px;font-size:10.5px;color:#000;font-weight:400;">A</div>
<div class="a" style="left:113px;top:331.5px;width:1px;height:35.0px;background:#d0d0d0;"></div>
<div class="a" style="left:98px;top:371.5px;width:30px;height:17.0px;background:#535353;"></div>
<div class="a t" style="left:98.2px;top:376.0px;font-size:10px;color:#e8e8e8;font-weight:400;">10-11</div>
<div class="a" style="left:63px;top:395.5px;width:50px;height:35.0px;background:#ffffff;"></div>
<div class="a" style="left:64px;top:398.0px;width:20.5px;height:13.5px;background:#e2e2e2;"></div>
<div class="a" style="left:64px;top:413.0px;width:20.5px;height:14.0px;background:#e2e2e2;"></div>
<div class="a" style="left:87px;top:395.5px;width:26px;height:35.0px;background:#000;"></div>
<div class="a" style="left:90px;top:398.5px;width:2px;height:1.0px;background:#aaa;"></div>
<div class="a" style="left:92px;top:401.5px;width:7px;height:5.0px;background:#dcdcdc;"></div>
<div class="a" style="left:92px;top:408.5px;width:2px;height:1.0px;background:#ccc;"></div>
<div class="a" style="left:92px;top:410.5px;width:16px;height:0.6px;background:#aaa;"></div>
<div class="a" style="left:92px;top:415.5px;width:6px;height:1.0px;background:#bbb;"></div>
<div class="a" style="left:92px;top:417.5px;width:16px;height:6.0px;background:#aaa;"></div>
<div class="a" style="left:97px;top:425.5px;width:2px;height:1.0px;background:#aaa;"></div>
<div class="a" style="left:114px;top:395.5px;width:50px;height:35.0px;background:#e0e0e0;"></div>
<div class="a" style="left:63px;top:395.5px;width:10px;height:11.0px;background:#ffffff;"></div>
<div class="a" style="left:153px;top:395.5px;width:11px;height:11.0px;background:#ffffff;"></div>
<div class="a t" style="left:63.3px;top:397.0px;font-size:10.5px;color:#000;font-weight:400;">A</div>
<div class="a t" style="left:153.8px;top:397.0px;font-size:10.5px;color:#000;font-weight:400;">A</div>
<div class="a" style="left:113px;top:395.5px;width:1px;height:35.0px;background:#d0d0d0;"></div>
<div class="a" style="left:98px;top:435.5px;width:30px;height:17.0px;background:#535353;"></div>
<div class="a t" style="left:98.2px;top:440.0px;font-size:10px;color:#e8e8e8;font-weight:400;">12-13</div>
<div class="a" style="left:63px;top:459.5px;width:50px;height:35.0px;background:#ffffff;"></div>
<div class="a" style="left:114px;top:459.5px;width:50px;height:35.0px;background:#ffffff;"></div>
<div class="a" style="left:64px;top:462.5px;width:22px;height:11.5px;background:#e2e2e2;"></div>
<div class="a" style="left:64px;top:474.5px;width:22px;height:0.8px;background:#8a8a8a;"></div>
<div class="a" style="left:64px;top:475.8px;width:12px;height:0.7px;background:#9a9a9a;"></div>
<div class="a" style="left:64px;top:478.0px;width:8px;height:0.7px;background:#aaa;"></div>
<div class="a" style="left:64px;top:479.5px;width:22px;height:11.5px;background:#e2e2e2;"></div>
<div class="a" style="left:88px;top:462.5px;width:22px;height:11.5px;background:#e2e2e2;"></div>
<div class="a" style="left:88px;top:474.5px;width:22px;height:0.8px;background:#8a8a8a;"></div>
<div class="a" style="left:88px;top:475.8px;width:12px;height:0.7px;background:#9a9a9a;"></div>
<div class="a" style="left:88px;top:478.0px;width:8px;height:0.7px;background:#aaa;"></div>
<div class="a" style="left:88px;top:479.5px;width:22px;height:11.5px;background:#e2e2e2;"></div>
<div class="a" style="left:116px;top:462.0px;width:18px;height:23px;border:1px solid #eeeeee"></div>
<div class="a" style="left:116px;top:484.5px;width:8.5px;height:7.0px;background:#e8e8e8;"></div>
<div class="a" style="left:125.5px;top:484.5px;width:8.5px;height:7.0px;background:#e8e8e8;"></div>
<div class="a" style="left:136px;top:462.0px;width:25px;height:14.0px;background:#e2e2e2;"></div>
<div class="a" style="left:136px;top:478.0px;width:6px;height:0.7px;background:#aaa;"></div>
<div class="a" style="left:136px;top:479.0px;width:25px;height:10.0px;background:#e2e2e2;"></div>
<div class="a" style="left:136px;top:489.0px;width:25px;height:1.5px;background:#000;"></div>
<div class="a" style="left:63px;top:459.5px;width:10px;height:11.0px;background:#ffffff;"></div>
<div class="a" style="left:153px;top:459.5px;width:11px;height:11.0px;background:#ffffff;"></div>
<div class="a t" style="left:63.3px;top:461.0px;font-size:10.5px;color:#000;font-weight:400;">A</div>
<div class="a t" style="left:153.8px;top:461.0px;font-size:10.5px;color:#000;font-weight:400;">A</div>
<div class="a" style="left:113px;top:459.5px;width:1px;height:35.0px;background:#d0d0d0;"></div>
<div class="a" style="left:98px;top:499.5px;width:30px;height:17.0px;background:#535353;"></div>
<div class="a t" style="left:98.2px;top:504.0px;font-size:10px;color:#e8e8e8;font-weight:400;">14-15</div>
<div class="a" style="left:63px;top:523.5px;width:50px;height:35.0px;background:#ffffff;"></div>
<div class="a" style="left:64px;top:526.0px;width:20.5px;height:13.5px;background:#e2e2e2;"></div>
<div class="a" style="left:64px;top:541.0px;width:20.5px;height:14.0px;background:#e2e2e2;"></div>
<div class="a" style="left:87px;top:523.5px;width:26px;height:35.0px;background:#000;"></div>
<div class="a" style="left:90px;top:526.5px;width:2px;height:1.0px;background:#aaa;"></div>
<div class="a" style="left:92px;top:529.5px;width:7px;height:5.0px;background:#dcdcdc;"></div>
<div class="a" style="left:92px;top:536.5px;width:2px;height:1.0px;background:#ccc;"></div>
<div class="a" style="left:92px;top:538.5px;width:16px;height:0.6px;background:#aaa;"></div>
<div class="a" style="left:92px;top:543.5px;width:6px;height:1.0px;background:#bbb;"></div>
<div class="a" style="left:92px;top:545.5px;width:16px;height:6.0px;background:#aaa;"></div>
<div class="a" style="left:97px;top:553.5px;width:2px;height:1.0px;background:#aaa;"></div>
<div class="a" style="left:114px;top:523.5px;width:50px;height:35.0px;background:#e0e0e0;"></div>
<div class="a" style="left:63px;top:523.5px;width:10px;height:11.0px;background:#ffffff;"></div>
<div class="a" style="left:153px;top:523.5px;width:11px;height:11.0px;background:#ffffff;"></div>
<div class="a t" style="left:63.3px;top:525.0px;font-size:10.5px;color:#000;font-weight:400;">A</div>
<div class="a t" style="left:153.8px;top:525.0px;font-size:10.5px;color:#000;font-weight:400;">A</div>
<div class="a" style="left:113px;top:523.5px;width:1px;height:35.0px;background:#d0d0d0;"></div>
<div class="a" style="left:98px;top:563.5px;width:30px;height:17.0px;background:#535353;"></div>
<div class="a t" style="left:98.2px;top:568.0px;font-size:10px;color:#e8e8e8;font-weight:400;">16-17</div>
<div class="a" style="left:63px;top:587.5px;width:50px;height:35.0px;background:#ffffff;"></div>
<div class="a" style="left:114px;top:587.5px;width:50px;height:35.0px;background:#ffffff;"></div>
<div class="a" style="left:64px;top:590.5px;width:22px;height:11.5px;background:#e2e2e2;"></div>
<div class="a" style="left:64px;top:602.5px;width:22px;height:0.8px;background:#8a8a8a;"></div>
<div class="a" style="left:64px;top:603.8px;width:12px;height:0.7px;background:#9a9a9a;"></div>
<div class="a" style="left:64px;top:606.0px;width:8px;height:0.7px;background:#aaa;"></div>
<div class="a" style="left:64px;top:607.5px;width:22px;height:11.5px;background:#e2e2e2;"></div>
<div class="a" style="left:88px;top:590.5px;width:22px;height:11.5px;background:#e2e2e2;"></div>
<div class="a" style="left:88px;top:602.5px;width:22px;height:0.8px;background:#8a8a8a;"></div>
<div class="a" style="left:88px;top:603.8px;width:12px;height:0.7px;background:#9a9a9a;"></div>
<div class="a" style="left:88px;top:606.0px;width:8px;height:0.7px;background:#aaa;"></div>
<div class="a" style="left:88px;top:607.5px;width:22px;height:11.5px;background:#e2e2e2;"></div>
<div class="a" style="left:116px;top:590.0px;width:18px;height:23px;border:1px solid #eeeeee"></div>
<div class="a" style="left:116px;top:612.5px;width:8.5px;height:7.0px;background:#e8e8e8;"></div>
<div class="a" style="left:125.5px;top:612.5px;width:8.5px;height:7.0px;background:#e8e8e8;"></div>
<div class="a" style="left:136px;top:590.0px;width:25px;height:14.0px;background:#e2e2e2;"></div>
<div class="a" style="left:136px;top:606.0px;width:6px;height:0.7px;background:#aaa;"></div>
<div class="a" style="left:136px;top:607.0px;width:25px;height:10.0px;background:#e2e2e2;"></div>
<div class="a" style="left:136px;top:617.0px;width:25px;height:1.5px;background:#000;"></div>
<div class="a" style="left:63px;top:587.5px;width:10px;height:11.0px;background:#ffffff;"></div>
<div class="a" style="left:153px;top:587.5px;width:11px;height:11.0px;background:#ffffff;"></div>
<div class="a t" style="left:63.3px;top:589.0px;font-size:10.5px;color:#000;font-weight:400;">A</div>
<div class="a t" style="left:153.8px;top:589.0px;font-size:10.5px;color:#000;font-weight:400;">A</div>
<div class="a" style="left:113px;top:587.5px;width:1px;height:35.0px;background:#d0d0d0;"></div>
<div class="a" style="left:98px;top:627.5px;width:30px;height:17.0px;background:#535353;"></div>
<div class="a t" style="left:98.2px;top:632.0px;font-size:10px;color:#e8e8e8;font-weight:400;">18-19</div>
<div class="a" style="left:63px;top:651.5px;width:50px;height:35.0px;background:#ffffff;"></div>
<div class="a" style="left:64px;top:654.0px;width:20.5px;height:13.5px;background:#e2e2e2;"></div>
<div class="a" style="left:64px;top:669.0px;width:20.5px;height:14.0px;background:#e2e2e2;"></div>
<div class="a" style="left:87px;top:651.5px;width:26px;height:35.0px;background:#000;"></div>
<div class="a" style="left:90px;top:654.5px;width:2px;height:1.0px;background:#aaa;"></div>
<div class="a" style="left:92px;top:657.5px;width:7px;height:5.0px;background:#dcdcdc;"></div>
<div class="a" style="left:92px;top:664.5px;width:2px;height:1.0px;background:#ccc;"></div>
<div class="a" style="left:92px;top:666.5px;width:16px;height:0.6px;background:#aaa;"></div>
<div class="a" style="left:92px;top:671.5px;width:6px;height:1.0px;background:#bbb;"></div>
<div class="a" style="left:92px;top:673.5px;width:16px;height:6.0px;background:#aaa;"></div>
<div class="a" style="left:97px;top:681.5px;width:2px;height:1.0px;background:#aaa;"></div>
<div class="a" style="left:114px;top:651.5px;width:50px;height:35.0px;background:#e0e0e0;"></div>
<div class="a" style="left:63px;top:651.5px;width:10px;height:11.0px;background:#ffffff;"></div>
<div class="a" style="left:153px;top:651.5px;width:11px;height:11.0px;background:#ffffff;"></div>
<div class="a t" style="left:63.3px;top:653.0px;font-size:10.5px;color:#000;font-weight:400;">A</div>
<div class="a t" style="left:153.8px;top:653.0px;font-size:10.5px;color:#000;font-weight:400;">A</div>
<div class="a" style="left:113px;top:651.5px;width:1px;height:35.0px;background:#d0d0d0;"></div>
<div class="a" style="left:98px;top:691.5px;width:30px;height:17.0px;background:#535353;"></div>
<div class="a t" style="left:98.2px;top:696.0px;font-size:10px;color:#e8e8e8;font-weight:400;">20-21</div>
<div class="a" style="left:63px;top:715.5px;width:50px;height:35.0px;background:#ffffff;"></div>
<div class="a" style="left:114px;top:715.5px;width:50px;height:35.0px;background:#ffffff;"></div>
<div class="a" style="left:64px;top:718.5px;width:22px;height:11.5px;background:#e2e2e2;"></div>
<div class="a" style="left:64px;top:730.5px;width:22px;height:0.8px;background:#8a8a8a;"></div>
<div class="a" style="left:64px;top:731.8px;width:12px;height:0.7px;background:#9a9a9a;"></div>
<div class="a" style="left:64px;top:734.0px;width:8px;height:0.7px;background:#aaa;"></div>
<div class="a" style="left:64px;top:735.5px;width:22px;height:11.5px;background:#e2e2e2;"></div>
<div class="a" style="left:88px;top:718.5px;width:22px;height:11.5px;background:#e2e2e2;"></div>
<div class="a" style="left:88px;top:730.5px;width:22px;height:0.8px;background:#8a8a8a;"></div>
<div class="a" style="left:88px;top:731.8px;width:12px;height:0.7px;background:#9a9a9a;"></div>
<div class="a" style="left:88px;top:734.0px;width:8px;height:0.7px;background:#aaa;"></div>
<div class="a" style="left:88px;top:735.5px;width:22px;height:11.5px;background:#e2e2e2;"></div>
<div class="a" style="left:116px;top:718.0px;width:18px;height:23px;border:1px solid #eeeeee"></div>
<div class="a" style="left:116px;top:740.5px;width:8.5px;height:7.0px;background:#e8e8e8;"></div>
<div class="a" style="left:125.5px;top:740.5px;width:8.5px;height:7.0px;background:#e8e8e8;"></div>
<div class="a" style="left:136px;top:718.0px;width:25px;height:14.0px;background:#e2e2e2;"></div>
<div class="a" style="left:136px;top:734.0px;width:6px;height:0.7px;background:#aaa;"></div>
<div class="a" style="left:136px;top:735.0px;width:25px;height:10.0px;background:#e2e2e2;"></div>
<div class="a" style="left:136px;top:745.0px;width:25px;height:1.5px;background:#000;"></div>
<div class="a" style="left:63px;top:715.5px;width:10px;height:11.0px;background:#ffffff;"></div>
<div class="a" style="left:153px;top:715.5px;width:11px;height:11.0px;background:#ffffff;"></div>
<div class="a t" style="left:63.3px;top:717.0px;font-size:10.5px;color:#000;font-weight:400;">A</div>
<div class="a t" style="left:153.8px;top:717.0px;font-size:10.5px;color:#000;font-weight:400;">A</div>
<div class="a" style="left:113px;top:715.5px;width:1px;height:35.0px;background:#d0d0d0;"></div>
<div class="a" style="left:98px;top:755.5px;width:30px;height:17.0px;background:#535353;"></div>
<div class="a t" style="left:98.2px;top:760.0px;font-size:10px;color:#e8e8e8;font-weight:400;">22-23</div>
</div>
<div class="a" style="left:1632px;top:981px;width:227px;height:1px;background:#5a5a5a;"></div>
<div class="a" style="left:1632px;top:982px;width:240px;height:23px;background:#535353;"></div>
<div class="a t" style="left:1637px;top:991.5px;font-size:10px;color:#e6e6e6;font-weight:400;letter-spacing:-0.15px">28 Pages in 15 Spreads</div>
<svg style="left:1777px;top:988px" width="20" height="13" viewBox="0 0 20 13"><rect x="1" y="6" width="8" height="6" stroke="#cfcfcf" stroke-width="1.1" fill="none"/><path d="M5 6 V2 H9 V4 H13 V11 H9" stroke="#cfcfcf" stroke-width="1.1" fill="none"/><rect x="17" y="11" width="1.5" height="1.5" fill="#cfcfcf"/></svg>
<svg style="left:1809px;top:988px" width="13" height="13" viewBox="0 0 13 13"><rect x="0.5" y="0.5" width="11" height="11" stroke="#cfcfcf" stroke-width="1" fill="none"/><path d="M6 3 V9 M3 6 H9" stroke="#cfcfcf" stroke-width="1.2"/></svg>
<svg style="left:1837px;top:988px" width="12" height="13" viewBox="0 0 12 13"><path d="M0 2 H11 M4 0.5 H7" stroke="#cfcfcf" stroke-width="1.1"/><path d="M1.5 2.5 V12 H9.5 V2.5 M4 4 V11 M5.5 4 V11 M7 4 V11" stroke="#cfcfcf" stroke-width="1" fill="none"/></svg>
<div class="a" style="left:1632px;top:1005px;width:240px;height:5px;background:#3d3d3d;"></div>
<div class="a" style="left:1632px;top:1010px;width:64px;height:9px;background:#535353;"></div>
<div class="a" style="left:1696px;top:1010px;width:176px;height:9px;background:#454545;"></div>
<div class="a" style="left:1750px;top:1010px;width:1px;height:9px;background:#3a3a3a;"></div>
<div class="a" style="left:1872px;top:93px;width:2px;height:926px;background:#3a3a3a;"></div>
<div class="a" style="left:1874px;top:106px;width:37px;height:913px;background:#535353;"></div>
<div class="a" style="left:1883px;top:108px;width:20px;height:4px;background:repeating-linear-gradient(90deg,#7a7a7a 0 1px,transparent 1px 2px)"></div>
<svg style="left:1885px;top:119px" width="18" height="18" viewBox="0 0 18 18"><rect x="1" y="3.5" width="12" height="13" stroke="#cdcdcd" stroke-width="1.2" fill="none"/><rect x="4" y="1" width="12" height="13" stroke="#cdcdcd" stroke-width="1.2" fill="#535353"/><path d="M10 1 V7 L12 5.5 L14 7 V1 Z" fill="#cdcdcd"/></svg>
<div class="a" style="left:1874px;top:146px;width:37px;height:1px;background:#3f3f3f;"></div>
</body></html>
